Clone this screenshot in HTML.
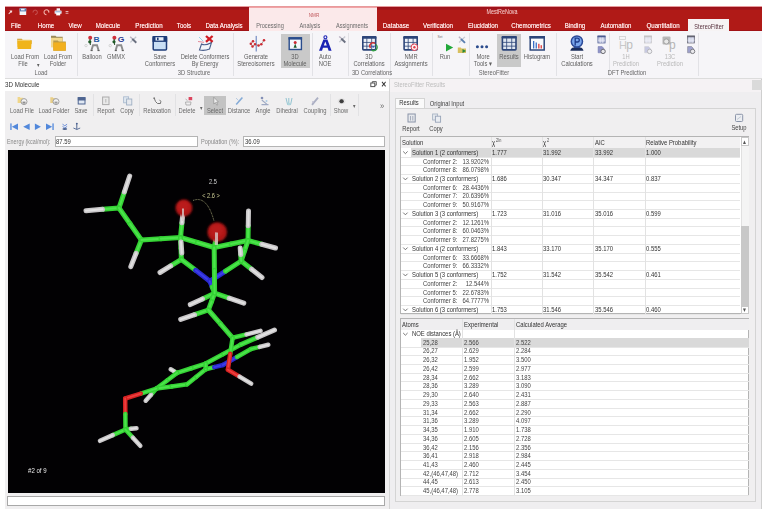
<!DOCTYPE html><html><head><meta charset="utf-8"><style>
html,body{margin:0;padding:0}
body{width:770px;height:516px;position:relative;overflow:hidden;background:#fff;font-family:"Liberation Sans",sans-serif}
.t{position:absolute;white-space:nowrap;line-height:10px}
svg{position:absolute;overflow:visible}
</style></head><body>
<div style="position:absolute;left:5px;top:6px;width:757px;height:25px;background:#b01a17"></div>
<div style="position:absolute;left:5px;top:30px;width:757px;height:1px;background:#a11216"></div>
<div style="position:absolute;left:5px;top:6px;width:757px;height:1px;background:#e89a9c"></div>
<div style="position:absolute;left:5px;top:7px;width:757px;height:2.5px;background:linear-gradient(#98101a,#a8161c)"></div>
<svg style="left:0;top:0" width="770" height="516">
<path d="M8.4 13.8 L10.2 11.4 L9.4 10.6 L12.2 10.4 L12 13 L11.2 12.2 L9 14.2 z" fill="#f6dcdc"/>
<rect x="19.6" y="8.4" width="6.6" height="6.6" fill="#f4f6fa"/><rect x="19.6" y="8.4" width="6.6" height="3" fill="#5a7cb0"/><rect x="21" y="8.8" width="3.6" height="1.6" fill="#e8eef8"/>
<path d="M33 12.5 a2.2 2.2 0 1 1 2 2" fill="none" stroke="#c85a5a" stroke-width="0.9"/>
<path d="M48.8 12.6 a2.4 2.4 0 1 0 -2.4 2" fill="none" stroke="#f0b0a8" stroke-width="1.1"/><path d="M47.6 10.4 l1.8 0.4 l-0.6 1.6z" fill="#f0b0a8"/>
<rect x="56.6" y="8.3" width="3.4" height="2.4" fill="#f4f4f8"/><rect x="54.6" y="10.4" width="7" height="3.4" rx="0.6" fill="#e8eef6"/><rect x="56.2" y="12.6" width="4" height="2.8" fill="#ffffff"/><rect x="55.4" y="11.4" width="5.4" height="0.8" fill="#7a9ac8"/>
<rect x="65.6" y="11.2" width="2.8" height="0.8" fill="#f4d8d8"/><rect x="65.6" y="12.8" width="2.8" height="0.8" fill="#f4d8d8"/>
</svg>
<div style="position:absolute;left:249px;top:7px;width:127.5px;height:24px;background:#fbe9ea;border-top:1.5px solid #f0a4a6;box-sizing:border-box"></div>
<div class="t" style="left:214.00px;width:200px;text-align:center;top:9.82px;font-size:5.52px;color:#c0585c;transform:scaleX(0.833);transform-origin:50% 0;">NMR</div>
<div class="t" style="left:402.00px;width:200px;text-align:center;top:6.78px;font-size:6.48px;color:#f6d6d6;transform:scaleX(0.833);transform-origin:50% 0;">MestReNova</div>
<div class="t" style="left:-83.70px;width:200px;text-align:center;top:21.23px;font-size:7.38px;color:#fbe0e0;transform:scaleX(0.833);transform-origin:50% 0;text-shadow:0 0 0.4px #fbe0e0">File</div>
<div class="t" style="left:-54.10px;width:200px;text-align:center;top:21.23px;font-size:7.38px;color:#fbe0e0;transform:scaleX(0.833);transform-origin:50% 0;text-shadow:0 0 0.4px #fbe0e0">Home</div>
<div class="t" style="left:-24.70px;width:200px;text-align:center;top:21.23px;font-size:7.38px;color:#fbe0e0;transform:scaleX(0.833);transform-origin:50% 0;text-shadow:0 0 0.4px #fbe0e0">View</div>
<div class="t" style="left:8.30px;width:200px;text-align:center;top:21.23px;font-size:7.38px;color:#fbe0e0;transform:scaleX(0.833);transform-origin:50% 0;text-shadow:0 0 0.4px #fbe0e0">Molecule</div>
<div class="t" style="left:48.80px;width:200px;text-align:center;top:21.23px;font-size:7.38px;color:#fbe0e0;transform:scaleX(0.833);transform-origin:50% 0;text-shadow:0 0 0.4px #fbe0e0">Prediction</div>
<div class="t" style="left:84.30px;width:200px;text-align:center;top:21.23px;font-size:7.38px;color:#fbe0e0;transform:scaleX(0.833);transform-origin:50% 0;text-shadow:0 0 0.4px #fbe0e0">Tools</div>
<div class="t" style="left:123.60px;width:200px;text-align:center;top:21.23px;font-size:7.38px;color:#fbe0e0;transform:scaleX(0.833);transform-origin:50% 0;text-shadow:0 0 0.4px #fbe0e0">Data Analysis</div>
<div class="t" style="left:296.00px;width:200px;text-align:center;top:21.23px;font-size:7.38px;color:#fbe0e0;transform:scaleX(0.833);transform-origin:50% 0;text-shadow:0 0 0.4px #fbe0e0">Database</div>
<div class="t" style="left:338.30px;width:200px;text-align:center;top:21.23px;font-size:7.38px;color:#fbe0e0;transform:scaleX(0.833);transform-origin:50% 0;text-shadow:0 0 0.4px #fbe0e0">Verification</div>
<div class="t" style="left:382.50px;width:200px;text-align:center;top:21.23px;font-size:7.38px;color:#fbe0e0;transform:scaleX(0.833);transform-origin:50% 0;text-shadow:0 0 0.4px #fbe0e0">Elucidation</div>
<div class="t" style="left:430.70px;width:200px;text-align:center;top:21.23px;font-size:7.38px;color:#fbe0e0;transform:scaleX(0.833);transform-origin:50% 0;text-shadow:0 0 0.4px #fbe0e0">Chemometrics</div>
<div class="t" style="left:475.00px;width:200px;text-align:center;top:21.23px;font-size:7.38px;color:#fbe0e0;transform:scaleX(0.833);transform-origin:50% 0;text-shadow:0 0 0.4px #fbe0e0">Binding</div>
<div class="t" style="left:515.50px;width:200px;text-align:center;top:21.23px;font-size:7.38px;color:#fbe0e0;transform:scaleX(0.833);transform-origin:50% 0;text-shadow:0 0 0.4px #fbe0e0">Automation</div>
<div class="t" style="left:563.00px;width:200px;text-align:center;top:21.23px;font-size:7.38px;color:#fbe0e0;transform:scaleX(0.833);transform-origin:50% 0;text-shadow:0 0 0.4px #fbe0e0">Quantitation</div>
<div class="t" style="left:170.00px;width:200px;text-align:center;top:21.36px;font-size:6.72px;color:#6a6a6a;transform:scaleX(0.833);transform-origin:50% 0;">Processing</div>
<div class="t" style="left:209.80px;width:200px;text-align:center;top:21.36px;font-size:6.72px;color:#6a6a6a;transform:scaleX(0.833);transform-origin:50% 0;">Analysis</div>
<div class="t" style="left:251.80px;width:200px;text-align:center;top:21.36px;font-size:6.72px;color:#6a6a6a;transform:scaleX(0.833);transform-origin:50% 0;">Assignments</div>
<div style="position:absolute;left:687.8px;top:19.4px;width:41.5px;height:11.600000000000001px;background:#f6f3f4"></div>
<div class="t" style="left:608.60px;width:200px;text-align:center;top:21.56px;font-size:6.72px;color:#5a3440;transform:scaleX(0.833);transform-origin:50% 0;">StereoFitter</div>
<div style="position:absolute;left:5px;top:31px;width:757px;height:47px;background:#f6f5f8"></div>
<div style="position:absolute;left:5px;top:77.8px;width:757px;height:1.0px;background:#dcdcdc"></div>
<div style="position:absolute;left:77px;top:33px;width:0.7999999999999972px;height:43px;background:#e2e2e6"></div>
<div style="position:absolute;left:233px;top:33px;width:0.8000000000000114px;height:43px;background:#e2e2e6"></div>
<div style="position:absolute;left:312px;top:33px;width:0.8000000000000114px;height:43px;background:#e2e2e6"></div>
<div style="position:absolute;left:348.3px;top:33px;width:0.8000000000000114px;height:43px;background:#e2e2e6"></div>
<div style="position:absolute;left:389.5px;top:33px;width:0.8000000000000114px;height:43px;background:#e2e2e6"></div>
<div style="position:absolute;left:431.8px;top:33px;width:0.8000000000000114px;height:43px;background:#e2e2e6"></div>
<div style="position:absolute;left:468.6px;top:33px;width:0.8000000000000114px;height:43px;background:#e2e2e6"></div>
<div style="position:absolute;left:555.5px;top:33px;width:0.7999999999999545px;height:43px;background:#e2e2e6"></div>
<div style="position:absolute;left:609px;top:33px;width:0.7999999999999545px;height:43px;background:#e2e2e6"></div>
<div style="position:absolute;left:698.2px;top:33px;width:0.7999999999999545px;height:43px;background:#e2e2e6"></div>
<div class="t" style="left:-75.25px;width:200px;text-align:center;top:52.45px;font-size:6.96px;color:#606060;transform:scaleX(0.833);transform-origin:50% 0;">Load From</div>
<div class="t" style="left:-77.10px;width:200px;text-align:center;top:59.15px;font-size:6.96px;color:#606060;transform:scaleX(0.833);transform-origin:50% 0;">File</div>
<div class="t" style="left:-61.80px;width:200px;text-align:center;top:59.72px;font-size:5.52px;color:#606060;transform:scaleX(0.833);transform-origin:50% 0;">▾</div>
<div class="t" style="left:-41.60px;width:200px;text-align:center;top:52.45px;font-size:6.96px;color:#606060;transform:scaleX(0.833);transform-origin:50% 0;">Load From</div>
<div class="t" style="left:-41.60px;width:200px;text-align:center;top:59.15px;font-size:6.96px;color:#606060;transform:scaleX(0.833);transform-origin:50% 0;">Folder</div>
<div class="t" style="left:-59.50px;width:200px;text-align:center;top:67.95px;font-size:6.96px;color:#666;transform:scaleX(0.833);transform-origin:50% 0;">Load</div>
<div class="t" style="left:-7.80px;width:200px;text-align:center;top:52.45px;font-size:6.96px;color:#606060;transform:scaleX(0.833);transform-origin:50% 0;">Balloon</div>
<div class="t" style="left:16.00px;width:200px;text-align:center;top:52.45px;font-size:6.96px;color:#606060;transform:scaleX(0.833);transform-origin:50% 0;">GMMX</div>
<div class="t" style="left:59.70px;width:200px;text-align:center;top:52.45px;font-size:6.96px;color:#606060;transform:scaleX(0.833);transform-origin:50% 0;">Save</div>
<div class="t" style="left:59.70px;width:200px;text-align:center;top:59.15px;font-size:6.96px;color:#606060;transform:scaleX(0.833);transform-origin:50% 0;">Conformers</div>
<div class="t" style="left:105.00px;width:200px;text-align:center;top:52.45px;font-size:6.96px;color:#606060;transform:scaleX(0.833);transform-origin:50% 0;">Delete Conformers</div>
<div class="t" style="left:105.00px;width:200px;text-align:center;top:59.15px;font-size:6.96px;color:#606060;transform:scaleX(0.833);transform-origin:50% 0;">By Energy</div>
<div class="t" style="left:94.20px;width:200px;text-align:center;top:67.95px;font-size:6.96px;color:#666;transform:scaleX(0.833);transform-origin:50% 0;">3D Structure</div>
<div class="t" style="left:156.30px;width:200px;text-align:center;top:52.45px;font-size:6.96px;color:#606060;transform:scaleX(0.833);transform-origin:50% 0;">Generate</div>
<div class="t" style="left:156.30px;width:200px;text-align:center;top:59.15px;font-size:6.96px;color:#606060;transform:scaleX(0.833);transform-origin:50% 0;">Stereoisomers</div>
<div style="position:absolute;left:281px;top:34px;width:28.5px;height:33.7px;background:#c9c9c9"></div>
<div class="t" style="left:195.40px;width:200px;text-align:center;top:52.45px;font-size:6.96px;color:#606060;transform:scaleX(0.833);transform-origin:50% 0;">3D</div>
<div class="t" style="left:195.40px;width:200px;text-align:center;top:59.15px;font-size:6.96px;color:#606060;transform:scaleX(0.833);transform-origin:50% 0;">Molecule</div>
<div class="t" style="left:225.00px;width:200px;text-align:center;top:52.45px;font-size:6.96px;color:#606060;transform:scaleX(0.833);transform-origin:50% 0;">Auto</div>
<div class="t" style="left:225.00px;width:200px;text-align:center;top:59.15px;font-size:6.96px;color:#606060;transform:scaleX(0.833);transform-origin:50% 0;">NOE</div>
<div class="t" style="left:269.00px;width:200px;text-align:center;top:52.45px;font-size:6.96px;color:#606060;transform:scaleX(0.833);transform-origin:50% 0;">3D</div>
<div class="t" style="left:269.00px;width:200px;text-align:center;top:59.15px;font-size:6.96px;color:#606060;transform:scaleX(0.833);transform-origin:50% 0;">Correlations</div>
<div class="t" style="left:271.70px;width:200px;text-align:center;top:67.95px;font-size:6.96px;color:#666;transform:scaleX(0.833);transform-origin:50% 0;">3D Correlations</div>
<div class="t" style="left:310.50px;width:200px;text-align:center;top:52.45px;font-size:6.96px;color:#606060;transform:scaleX(0.833);transform-origin:50% 0;">NMR</div>
<div class="t" style="left:310.50px;width:200px;text-align:center;top:59.15px;font-size:6.96px;color:#606060;transform:scaleX(0.833);transform-origin:50% 0;">Assignments</div>
<div class="t" style="left:345.00px;width:200px;text-align:center;top:52.45px;font-size:6.96px;color:#606060;transform:scaleX(0.833);transform-origin:50% 0;">Run</div>
<div class="t" style="left:383.00px;width:200px;text-align:center;top:52.45px;font-size:6.96px;color:#606060;transform:scaleX(0.833);transform-origin:50% 0;">More</div>
<div class="t" style="left:383.00px;width:200px;text-align:center;top:59.15px;font-size:6.96px;color:#606060;transform:scaleX(0.833);transform-origin:50% 0;">Tools ▾</div>
<div style="position:absolute;left:497.2px;top:34px;width:23.900000000000034px;height:33px;background:#c9c9c9"></div>
<div class="t" style="left:408.80px;width:200px;text-align:center;top:52.45px;font-size:6.96px;color:#606060;transform:scaleX(0.833);transform-origin:50% 0;">Results</div>
<div class="t" style="left:437.30px;width:200px;text-align:center;top:52.45px;font-size:6.96px;color:#606060;transform:scaleX(0.833);transform-origin:50% 0;">Histogram</div>
<div class="t" style="left:393.60px;width:200px;text-align:center;top:67.95px;font-size:6.96px;color:#666;transform:scaleX(0.833);transform-origin:50% 0;">StereoFitter</div>
<div class="t" style="left:477.00px;width:200px;text-align:center;top:52.45px;font-size:6.96px;color:#606060;transform:scaleX(0.833);transform-origin:50% 0;">Start</div>
<div class="t" style="left:477.00px;width:200px;text-align:center;top:59.15px;font-size:6.96px;color:#606060;transform:scaleX(0.833);transform-origin:50% 0;">Calculations</div>
<div class="t" style="left:526.00px;width:200px;text-align:center;top:52.45px;font-size:6.96px;color:#b8b8b8;transform:scaleX(0.833);transform-origin:50% 0;">1H</div>
<div class="t" style="left:526.00px;width:200px;text-align:center;top:59.15px;font-size:6.96px;color:#b8b8b8;transform:scaleX(0.833);transform-origin:50% 0;">Prediction</div>
<div class="t" style="left:569.50px;width:200px;text-align:center;top:52.45px;font-size:6.96px;color:#b8b8b8;transform:scaleX(0.833);transform-origin:50% 0;">13C</div>
<div class="t" style="left:569.50px;width:200px;text-align:center;top:59.15px;font-size:6.96px;color:#b8b8b8;transform:scaleX(0.833);transform-origin:50% 0;">Prediction</div>
<div class="t" style="left:526.80px;width:200px;text-align:center;top:67.95px;font-size:6.96px;color:#666;transform:scaleX(0.833);transform-origin:50% 0;">DFT Prediction</div>
<svg style="left:0;top:0" width="770" height="516" viewBox="0 0 770 516">
<path d="M17.2 38.7 h4.544 l1 1.2 h8.804 v4.199999999999999 h-14.2 z" fill="#c99a30"/>
<rect x="17.2" y="39.7" width="13.489999999999998" height="7.199999999999999" fill="#f3d27a"/>
<path d="M17.5 40.800000000000004 h14.2 l-0.6 8.16 h-13.6 z" fill="#f0b41a"/>
<path d="M51 35.8 h4.5 l1 1 h6.2 v5 h-11.7 z" fill="#9c8a58"/><rect x="51" y="37.8" width="11.6" height="9.6" fill="#f3d98e"/>
<path d="M53.3 40.6 h4.5 l1 1 h7 v9.2 h-12.5 z" fill="#b89a48"/><rect x="53.3" y="42.4" width="12.5" height="8.3" fill="#f2b01e"/>
<circle cx="90.2" cy="37.8" r="2" fill="#d0303c"/>
<line x1="90" y1="39" x2="90.4" y2="45" stroke="#3a5a3a" stroke-width="1.1"/>
<circle cx="89.8" cy="41.8" r="1.6" fill="#1f5a28"/>
<circle cx="86" cy="45.6" r="1.2" fill="none" stroke="#c0c0c0" stroke-width="0.6"/>
<path d="M91.4 50.6 L93 45.2 L97 45.2 L98.6 50.6" fill="none" stroke="#8c8c8c" stroke-width="1.9"/>
<path d="M90.6 50.6 h2 M97.6 50.6 h2" stroke="#555" stroke-width="1"/>
<text x="93.6" y="41.8" font-family="Liberation Sans" font-weight="bold" font-size="7.6" fill="#2a5aa0" transform="translate(93.6 0) scale(1.12 1) translate(-93.6 0)">B</text>
<circle cx="114.4" cy="37.8" r="2" fill="#d0303c"/>
<line x1="114.2" y1="39" x2="114.60000000000001" y2="45" stroke="#3a5a3a" stroke-width="1.1"/>
<circle cx="114.0" cy="41.8" r="1.6" fill="#1f5a28"/>
<circle cx="110.2" cy="45.6" r="1.2" fill="none" stroke="#c0c0c0" stroke-width="0.6"/>
<path d="M115.60000000000001 50.6 L117.2 45.2 L121.2 45.2 L122.8 50.6" fill="none" stroke="#8c8c8c" stroke-width="1.9"/>
<path d="M114.8 50.6 h2 M121.8 50.6 h2" stroke="#555" stroke-width="1"/>
<text x="117.8" y="41.8" font-family="Liberation Sans" font-weight="bold" font-size="7.6" fill="#2a3a90" transform="translate(117.8 0) scale(1.12 1) translate(-117.8 0)">G</text>
<line x1="136.2" y1="36.8" x2="130.4" y2="42.4" stroke="#c4c8d0" stroke-width="1.3"/>
<line x1="130.2" y1="36.699999999999996" x2="132" y2="38.4" stroke="#b8b0c0" stroke-width="1.4"/>
<line x1="132.2" y1="38.8" x2="136.3" y2="42.8" stroke="#6a7080" stroke-width="1.9"/>
<rect x="153.2" y="36.8" width="13.3" height="13.3" rx="1" fill="#c9def4" stroke="#1e3c78" stroke-width="1.5"/>
<rect x="152.5" y="36.1" width="14.7" height="5.8" fill="#1e3c78"/><rect x="155.5" y="37.2" width="8" height="3.4" fill="#e6eef8"/><rect x="157" y="37.6" width="1.6" height="2.6" fill="#1e3c78"/>
<path d="M199.5 50 L201.5 44 Q205 46 210.5 43 L211.6 42.2 L209.5 49 Q205 51 199.5 50 z" fill="#f4f6fa" stroke="#4a5f8c" stroke-width="1.1"/>
<line x1="198" y1="41.5" x2="204" y2="42.3" stroke="#e07080" stroke-width="0.8"/><line x1="199" y1="37" x2="203" y2="41" stroke="#80c8e0" stroke-width="0.8"/>
<path d="M206 36 L212.6 41.8 M212.6 36 L206 41.8" stroke="#d01c24" stroke-width="2.3"/>
<line x1="256.2" y1="35.9" x2="256.2" y2="51.5" stroke="#5a78b8" stroke-width="1"/>
<polyline points="264,40.2 261.3,44.2 258.5,45.6 255,44.2 252.5,46.5 250.8,43.8 253,41.3" fill="none" stroke="#a09090" stroke-width="0.9"/>
<circle cx="264" cy="40.2" r="1.25" fill="#cc2a34"/>
<circle cx="261.3" cy="44.2" r="1.25" fill="#cc2a34"/>
<circle cx="258.5" cy="45.6" r="1.25" fill="#cc2a34"/>
<circle cx="252.5" cy="46.5" r="1.25" fill="#cc2a34"/>
<circle cx="250.8" cy="43.8" r="1.25" fill="#cc2a34"/>
<circle cx="253" cy="41.3" r="1.25" fill="#cc2a34"/>
<circle cx="255" cy="44.2" r="1.25" fill="#cc2a34"/>
<rect x="289.2" y="37.9" width="12.2" height="11.6" fill="#f4f8fc" stroke="#2a4c8c" stroke-width="1.4"/><rect x="288.5" y="37.2" width="13.6" height="2.4" fill="#2a4c8c"/>
<circle cx="295.2" cy="42.4" r="1.5" fill="#cc2a34"/><path d="M293.6 47.8 L295.2 43.6 L296.8 47.8 z" fill="#1e5a2a"/>
<path d="M319 50.8 L323.4 39.6 L327.4 39.6 L331.6 50.8 L328.6 50.8 L327.6 47.8 L323 47.8 L322 50.8 z M323.8 45.6 L326.8 45.6 L325.3 41.4 z" fill="#1a22b4" fill-rule="evenodd"/><circle cx="325.4" cy="37.2" r="1.5" fill="none" stroke="#1a22b4" stroke-width="1.1"/>
<line x1="345.2" y1="36.5" x2="339.4" y2="42.1" stroke="#c4c8d0" stroke-width="1.3"/>
<line x1="339.2" y1="36.4" x2="341" y2="38.1" stroke="#b8b0c0" stroke-width="1.4"/>
<line x1="341.2" y1="38.5" x2="345.3" y2="42.5" stroke="#6a7080" stroke-width="1.9"/>
<rect x="362.8" y="36.9" width="12.9" height="13.0" fill="#eef2f8" stroke="#2c4579" stroke-width="1.6" rx="0.8"/><rect x="362" y="36.1" width="14.5" height="2.6" fill="#2c4579" rx="0.8"/><line x1="366.8333333333333" y1="38.1" x2="366.8333333333333" y2="49.900000000000006" stroke="#2c4579" stroke-width="0.8"/><line x1="371.6666666666667" y1="38.1" x2="371.6666666666667" y2="49.900000000000006" stroke="#2c4579" stroke-width="0.8"/><line x1="362.8" y1="42.43333333333334" x2="375.7" y2="42.43333333333334" stroke="#2c4579" stroke-width="0.8"/><line x1="362.8" y1="46.16666666666667" x2="375.7" y2="46.16666666666667" stroke="#2c4579" stroke-width="0.8"/>
<path d="M370.5 48 a3.2 3.2 0 0 1 4.5 -4.5" fill="none" stroke="#d03030" stroke-width="1.4"/><path d="M375.8 44.5 a3.2 3.2 0 0 1 -4.2 5.5" fill="none" stroke="#30a040" stroke-width="1.4"/><circle cx="373.2" cy="46.8" r="0.9" fill="#3050c0"/>
<rect x="404.1" y="36.9" width="13.1" height="13.0" fill="#eef2f8" stroke="#2c4579" stroke-width="1.6" rx="0.8"/><rect x="403.3" y="36.1" width="14.7" height="2.6" fill="#2c4579" rx="0.8"/><line x1="408.2" y1="38.1" x2="408.2" y2="49.900000000000006" stroke="#2c4579" stroke-width="0.8"/><line x1="413.1" y1="38.1" x2="413.1" y2="49.900000000000006" stroke="#2c4579" stroke-width="0.8"/><line x1="404.1" y1="42.43333333333334" x2="417.2" y2="42.43333333333334" stroke="#2c4579" stroke-width="0.8"/><line x1="404.1" y1="46.16666666666667" x2="417.2" y2="46.16666666666667" stroke="#2c4579" stroke-width="0.8"/>
<circle cx="414.4" cy="47.2" r="3.3" fill="#fdf0f0" stroke="#e04050" stroke-width="1"/><circle cx="414.4" cy="47.2" r="1.2" fill="#e04050"/>
<text x="437.4" y="38.3" font-family="Liberation Sans" font-size="3.4" fill="#777">Set</text>
<path d="M446 43.7 L453.2 47.6 L446 51.5 z" fill="#22a83a"/>
<line x1="464.9" y1="36.9" x2="459.09999999999997" y2="42.5" stroke="#c4c8d0" stroke-width="1.3"/>
<line x1="458.9" y1="36.8" x2="460.7" y2="38.5" stroke="#b8b0c0" stroke-width="1.4"/>
<line x1="460.9" y1="38.9" x2="465.0" y2="42.9" stroke="#5a7fb0" stroke-width="1.9"/>
<path d="M457.8 47.6 h3 l0.7 0.8 h4.5 v4.6 h-8.2 z" fill="#d8c060"/><path d="M462.5 49 l3.6 2 l-3.6 2 z" fill="#2a8a3a"/>
<circle cx="477.4" cy="46.8" r="1.5" fill="#2a4a8c"/>
<circle cx="482" cy="46.8" r="1.5" fill="#2a4a8c"/>
<circle cx="486.6" cy="46.8" r="1.5" fill="#2a4a8c"/>
<rect x="502.40000000000003" y="36.8" width="13.6" height="13.1" fill="#dfe6f0" stroke="#2c4579" stroke-width="1.6" rx="0.8"/><rect x="501.6" y="36" width="15.2" height="2.6" fill="#2c4579" rx="0.8"/><line x1="506.6666666666667" y1="38" x2="506.6666666666667" y2="49.900000000000006" stroke="#2c4579" stroke-width="0.8"/><line x1="511.73333333333335" y1="38" x2="511.73333333333335" y2="49.900000000000006" stroke="#2c4579" stroke-width="0.8"/><line x1="502.40000000000003" y1="42.36666666666667" x2="516.0000000000001" y2="42.36666666666667" stroke="#2c4579" stroke-width="0.8"/><line x1="502.40000000000003" y1="46.13333333333333" x2="516.0000000000001" y2="46.13333333333333" stroke="#2c4579" stroke-width="0.8"/>
<rect x="530.2" y="36.8" width="14" height="13.2" fill="#f8fafc" stroke="#2c4579" stroke-width="1.5"/><rect x="529.5" y="36" width="15.4" height="2.6" fill="#2c4579"/>
<rect x="533" y="41" width="1.3" height="7.5" fill="#3a70c8"/><rect x="535.6" y="42.5" width="1.3" height="6" fill="#3a70c8"/><rect x="538.2" y="43.8" width="1.3" height="4.7" fill="#e03a3a"/><rect x="540.6" y="45.2" width="1.3" height="3.3" fill="#e03a3a"/>
<path d="M570.3 50.8 Q571 47.6 573.5 47.4 h6.8 Q582.8 47.6 583.5 50.8 z" fill="#1a2c5a"/><rect x="574" y="46" width="5.8" height="2" fill="#2a4a90"/>
<circle cx="576.9" cy="41.5" r="5.6" fill="#7aa6ec" stroke="#2c4a98" stroke-width="1.5"/>
<path d="M575.2 45.6 V38.2 h2.2 a1.9 1.9 0 0 1 0 3.8 h-2.2" fill="none" stroke="#1e3a88" stroke-width="1.3"/>
<g opacity="1"><rect x="597.9" y="36" width="7.2" height="7" fill="#c8cce4" stroke="#4a5a90" stroke-width="0.7"/><rect x="597.5" y="35.7" width="8" height="1.6" fill="#4a5a90"/><path d="M600.3 37.5 v5.4 M602.7 37.5 v5.4 M598.0 40.2 h7" stroke="#f0f2f8" stroke-width="0.6"/><path d="M598.1 46.6 h4 l1.6 1.6 v4.6 h-5.6 z" fill="#9094c8" stroke="#6a70a8" stroke-width="0.5"/><circle cx="603.1" cy="51.4" r="2.2" fill="#e8e8ec" stroke="#6a6a70" stroke-width="1"/></g>
<g opacity="0.45"><rect x="644.4" y="36" width="7.2" height="7" fill="#c8cce4" stroke="#8a8a8a" stroke-width="0.7"/><rect x="644" y="35.7" width="8" height="1.6" fill="#8a8a8a"/><path d="M646.8 37.5 v5.4 M649.2 37.5 v5.4 M644.5 40.2 h7" stroke="#f0f2f8" stroke-width="0.6"/><path d="M644.6 46.6 h4 l1.6 1.6 v4.6 h-5.6 z" fill="#9094c8" stroke="#9a9a9a" stroke-width="0.5"/><circle cx="649.6" cy="51.4" r="2.2" fill="#e8e8ec" stroke="#6a6a70" stroke-width="1"/></g>
<g opacity="0.85"><rect x="687.4" y="36" width="7.2" height="7" fill="#c8cce4" stroke="#4a4a5a" stroke-width="0.7"/><rect x="687" y="35.7" width="8" height="1.6" fill="#4a4a5a"/><path d="M689.8 37.5 v5.4 M692.2 37.5 v5.4 M687.5 40.2 h7" stroke="#f0f2f8" stroke-width="0.6"/><path d="M687.6 46.6 h4 l1.6 1.6 v4.6 h-5.6 z" fill="#9094c8" stroke="#5a5a6a" stroke-width="0.5"/><circle cx="692.6" cy="51.4" r="2.2" fill="#e8e8ec" stroke="#6a6a70" stroke-width="1"/></g>
<text x="619" y="48.6" font-family="Liberation Sans" font-size="11" fill="#c8c8c8">H</text><text x="626.2" y="48.6" font-family="Liberation Sans" font-size="12" fill="#bdbdbd">p</text><rect x="619.4" y="36.4" width="6" height="3" fill="none" stroke="#d0d0d0" stroke-width="0.8"/>
<rect x="662.5" y="36.4" width="8" height="8" fill="#b8b8b8" rx="1"/><circle cx="666.3" cy="41.5" r="2.6" fill="#e8e8e8" stroke="#a0a0a0" stroke-width="1"/><text x="669" y="48.6" font-family="Liberation Sans" font-size="12" fill="#b4b4b4">p</text>
</svg>
<div style="position:absolute;left:5px;top:78.8px;width:384px;height:430.2px;background:#f0eff0"></div>
<div style="position:absolute;left:5px;top:78.8px;width:384px;height:11.799999999999997px;background:#ffffff"></div>
<div class="t" style="left:5.30px;top:80.43px;font-size:7.44px;color:#333;transform:scaleX(0.833);transform-origin:0 0;">3D Molecule</div>
<svg style="left:0;top:0" width="770" height="516"><rect x="370.8" y="83" width="4" height="3.6" fill="none" stroke="#555" stroke-width="1"/><path d="M372.3 83 v-1.4 h4 v3.6 h-1.5" fill="none" stroke="#555" stroke-width="0.9"/></svg>
<div class="t" style="left:283.60px;width:200px;text-align:center;top:79.50px;font-size:7.92px;color:#333;transform:scaleX(0.833);transform-origin:50% 0;font-weight:bold">✕</div>
<div class="t" style="left:-78.10px;width:200px;text-align:center;top:105.75px;font-size:6.96px;color:#6a6a6a;transform:scaleX(0.833);transform-origin:50% 0;">Load File</div>
<div class="t" style="left:-46.30px;width:200px;text-align:center;top:105.75px;font-size:6.96px;color:#6a6a6a;transform:scaleX(0.833);transform-origin:50% 0;">Load Folder</div>
<div class="t" style="left:-18.80px;width:200px;text-align:center;top:105.75px;font-size:6.96px;color:#6a6a6a;transform:scaleX(0.833);transform-origin:50% 0;">Save</div>
<div class="t" style="left:5.50px;width:200px;text-align:center;top:105.75px;font-size:6.96px;color:#6a6a6a;transform:scaleX(0.833);transform-origin:50% 0;">Report</div>
<div class="t" style="left:27.30px;width:200px;text-align:center;top:105.75px;font-size:6.96px;color:#6a6a6a;transform:scaleX(0.833);transform-origin:50% 0;">Copy</div>
<div class="t" style="left:56.60px;width:200px;text-align:center;top:105.75px;font-size:6.96px;color:#6a6a6a;transform:scaleX(0.833);transform-origin:50% 0;">Relaxation</div>
<div class="t" style="left:87.10px;width:200px;text-align:center;top:105.75px;font-size:6.96px;color:#6a6a6a;transform:scaleX(0.833);transform-origin:50% 0;">Delete</div>
<div style="position:absolute;left:175px;top:94px;width:0.8000000000000114px;height:22px;background:#e2e2e4"></div>
<div style="position:absolute;left:93.3px;top:94px;width:0.7999999999999972px;height:22px;background:#e2e2e4"></div>
<div style="position:absolute;left:138.7px;top:94px;width:0.8000000000000114px;height:22px;background:#e2e2e4"></div>
<div style="position:absolute;left:204.3px;top:95.9px;width:21.399999999999977px;height:19.19999999999999px;background:#c3c3c3"></div>
<div class="t" style="left:115.40px;width:200px;text-align:center;top:105.95px;font-size:6.96px;color:#6a6a6a;transform:scaleX(0.833);transform-origin:50% 0;">Select</div>
<div class="t" style="left:139.00px;width:200px;text-align:center;top:105.95px;font-size:6.96px;color:#6a6a6a;transform:scaleX(0.833);transform-origin:50% 0;">Distance</div>
<div class="t" style="left:163.20px;width:200px;text-align:center;top:105.95px;font-size:6.96px;color:#6a6a6a;transform:scaleX(0.833);transform-origin:50% 0;">Angle</div>
<div class="t" style="left:187.10px;width:200px;text-align:center;top:105.95px;font-size:6.96px;color:#6a6a6a;transform:scaleX(0.833);transform-origin:50% 0;">Dihedral</div>
<div class="t" style="left:214.80px;width:200px;text-align:center;top:105.95px;font-size:6.96px;color:#6a6a6a;transform:scaleX(0.833);transform-origin:50% 0;">Coupling</div>
<div class="t" style="left:241.30px;width:200px;text-align:center;top:105.95px;font-size:6.96px;color:#6a6a6a;transform:scaleX(0.833);transform-origin:50% 0;">Show</div>
<div class="t" style="left:101.00px;width:200px;text-align:center;top:103.20px;font-size:6.00px;color:#666;transform:scaleX(0.833);transform-origin:50% 0;">▾</div>
<div class="t" style="left:253.80px;width:200px;text-align:center;top:101.20px;font-size:6.00px;color:#666;transform:scaleX(0.833);transform-origin:50% 0;">▾</div>
<div style="position:absolute;left:330px;top:94px;width:0.8000000000000114px;height:22px;background:#e2e2e4"></div>
<div style="position:absolute;left:358.4px;top:94px;width:0.8000000000000114px;height:22px;background:#e2e2e4"></div>
<div class="t" style="left:282.00px;width:200px;text-align:center;top:100.85px;font-size:9.00px;color:#666;transform:scaleX(0.833);transform-origin:50% 0;">»</div>
<svg style="left:0;top:0;opacity:0.8" width="770" height="516" viewBox="0 0 770 516">
<path d="M17.6 97 h2.2 l0.6 0.7 h2.8 v5.4 h-5.6 z" fill="#f0d070"/><circle cx="24" cy="101.6" r="3" fill="#f4f4f4" stroke="#8a8a8a" stroke-width="1"/><rect x="22.5" y="101.6" width="3" height="2" fill="#777"/>
<path d="M50.3 97.2 h2.4 l0.6 0.7 h2.4 v5 h-5.4 z" fill="#e8c870"/><circle cx="56" cy="101.6" r="3" fill="#f4f4f4" stroke="#8a8a8a" stroke-width="1"/><rect x="54.5" y="101.6" width="3" height="2" fill="#888"/>
<rect x="78.2" y="97.6" width="6.8" height="6.4" fill="#dde7f4" stroke="#26427a" stroke-width="1"/><rect x="77.8" y="97.3" width="7.6" height="3.2" fill="#26427a"/>
<rect x="102.6" y="97" width="6.4" height="7.6" fill="#e8e8e8" stroke="#9a9a9a" stroke-width="1"/><line x1="105.8" y1="99" x2="105.8" y2="102.5" stroke="#999" stroke-width="0.8"/>
<rect x="123.6" y="96.8" width="5" height="6" fill="#dce6f0" stroke="#9ab0c8" stroke-width="0.9"/><rect x="126.6" y="99" width="5.2" height="6" fill="#e4e8ee" stroke="#8aa0b8" stroke-width="0.9"/>
<path d="M154 97.5 L155.5 101.5 Q157 104.5 160.5 103.5 Q161.6 101 159.5 99.8" fill="none" stroke="#555" stroke-width="1"/><path d="M153.2 99 l1 -2 l1 2 z" fill="#555"/>
<rect x="188.6" y="97" width="3.6" height="3.2" fill="#d81c3c"/><path d="M185.5 99 l2 1.6 M185.5 102 h5.5 l-0.5 3 h-4.5 z" fill="none" stroke="#999" stroke-width="0.9"/>
<path d="M213.8 97.2 L213.8 104 L215.4 102.6 L216.8 105.2 L217.8 104.7 L216.5 102.2 L218.4 102 z" fill="#f8f8f8" stroke="#777" stroke-width="0.6"/>
<line x1="236.2" y1="104.6" x2="242.4" y2="97.4" stroke="#6a9ad0" stroke-width="1.6"/><line x1="236" y1="98" x2="238.5" y2="100.5" stroke="#9ab8d8" stroke-width="0.8"/>
<circle cx="262" cy="98" r="1.3" fill="#6a78a8"/><path d="M261.5 104.6 h7 M261.8 100 l5.5 4.6" stroke="#8a98b8" stroke-width="1.1" fill="none"/><circle cx="266.5" cy="101" r="1" fill="#9ac0e0"/>
<path d="M286 98 l1.6 6.6 h3 l1.4 -6.6 M288.8 98 v5" stroke="#7ab8c8" stroke-width="1" fill="none"/><circle cx="289" cy="104" r="1.3" fill="#a0d0d8"/>
<line x1="312" y1="104.8" x2="318" y2="97.6" stroke="#9aa0b8" stroke-width="1.8"/><circle cx="313" cy="102" r="0.9" fill="#b0b0c8"/>
<circle cx="341.6" cy="101.2" r="2.2" fill="#111"/><ellipse cx="341.6" cy="101.2" rx="3.6" ry="2.4" fill="none" stroke="#ccc" stroke-width="0.6"/>
<rect x="10.3" y="123.4" width="1.3" height="6.6" fill="#2b6fd6"/><path d="M18 123.4 L11.8 126.7 L18 130 z" fill="#2b6fd6"/>
<path d="M29.7 123.4 L23.2 126.7 L29.7 130 z" fill="#2b6fd6"/>
<path d="M34.9 123.4 L40.9 126.7 L34.9 130 z" fill="#2b6fd6"/>
<path d="M46 123.4 L52.2 126.7 L46 130 z" fill="#2b6fd6"/><rect x="52.4" y="123.4" width="1.3" height="6.6" fill="#2b6fd6"/>
<path d="M62.5 124.2 l2.3 1.6 l2.3 -1.6 M62.5 126.4 l2.3 1.6 l2.3 -1.6" stroke="#3a6ad0" stroke-width="0.9" fill="none"/><ellipse cx="64.8" cy="129" rx="2.4" ry="1" fill="#26427a"/>
<line x1="76.8" y1="123" x2="76.8" y2="129.4" stroke="#26427a" stroke-width="1"/><path d="M73.4 128 q3.4 3 6.8 0" stroke="#26427a" stroke-width="0.9" fill="none"/><circle cx="76.8" cy="123.6" r="0.9" fill="#26427a"/>
</svg>
<div class="t" style="left:7.30px;top:137.48px;font-size:6.48px;color:#888;transform:scaleX(0.833);transform-origin:0 0;">Energy (kcal/mol):</div>
<div style="position:absolute;left:55px;top:136.3px;width:142.5px;height:10.399999999999977px;background:#fff;border:0.8px solid #b4b4b4;box-sizing:border-box"></div>
<div class="t" style="left:56.00px;top:137.35px;font-size:7.08px;color:#333;transform:scaleX(0.833);transform-origin:0 0;">87.59</div>
<div class="t" style="left:200.50px;top:137.46px;font-size:6.72px;color:#888;transform:scaleX(0.833);transform-origin:0 0;">Population (%):</div>
<div style="position:absolute;left:243px;top:136.3px;width:142.39999999999998px;height:10.399999999999977px;background:#fff;border:0.8px solid #b4b4b4;box-sizing:border-box"></div>
<div class="t" style="left:244.70px;top:137.35px;font-size:7.08px;color:#333;transform:scaleX(0.833);transform-origin:0 0;">36.09</div>
<div style="position:absolute;left:8px;top:150px;width:377px;height:343px;background:#020103"></div>
<svg style="left:0;top:0" width="770" height="516" viewBox="0 0 770 516">
<defs><filter id="bl" x="-5%" y="-5%" width="110%" height="110%"><feGaussianBlur stdDeviation="0.45"/></filter>
<radialGradient id="og" cx="40%" cy="40%" r="60%"><stop offset="0" stop-color="#e03535"/><stop offset="0.7" stop-color="#a81414"/><stop offset="1" stop-color="#6a0808"/></radialGradient></defs>
<g filter="url(#bl)" stroke-linecap="round">
<line x1="119" y1="208" x2="124.35" y2="192.0" stroke="#34d234" stroke-width="5.0"/>
<line x1="119" y1="208" x2="124.35" y2="192.0" stroke="#5cf05c" stroke-width="2.00" opacity="0.6"/>
<line x1="124.35" y1="192.0" x2="129.7" y2="176" stroke="#c8c6c8" stroke-width="5.0"/>
<line x1="124.35" y1="192.0" x2="129.7" y2="176" stroke="#f2f2f2" stroke-width="2.00" opacity="0.6"/>
<line x1="119" y1="208" x2="102.5" y2="209.35" stroke="#34d234" stroke-width="5.0"/>
<line x1="119" y1="208" x2="102.5" y2="209.35" stroke="#5cf05c" stroke-width="2.00" opacity="0.6"/>
<line x1="102.5" y1="209.35" x2="86" y2="210.7" stroke="#c8c6c8" stroke-width="5.0"/>
<line x1="102.5" y1="209.35" x2="86" y2="210.7" stroke="#f2f2f2" stroke-width="2.00" opacity="0.6"/>
<line x1="119" y1="208" x2="130.2" y2="224.0" stroke="#34d234" stroke-width="5.0"/>
<line x1="119" y1="208" x2="130.2" y2="224.0" stroke="#5cf05c" stroke-width="2.00" opacity="0.6"/>
<line x1="130.2" y1="224.0" x2="141.4" y2="240" stroke="#34d234" stroke-width="5.0"/>
<line x1="130.2" y1="224.0" x2="141.4" y2="240" stroke="#5cf05c" stroke-width="2.00" opacity="0.6"/>
<line x1="141.4" y1="240" x2="136.10000000000002" y2="253.3" stroke="#34d234" stroke-width="5.0"/>
<line x1="141.4" y1="240" x2="136.10000000000002" y2="253.3" stroke="#5cf05c" stroke-width="2.00" opacity="0.6"/>
<line x1="136.10000000000002" y1="253.3" x2="130.8" y2="266.6" stroke="#c8c6c8" stroke-width="5.0"/>
<line x1="136.10000000000002" y1="253.3" x2="130.8" y2="266.6" stroke="#f2f2f2" stroke-width="2.00" opacity="0.6"/>
<line x1="141.4" y1="240" x2="160.95" y2="238.75" stroke="#34d234" stroke-width="5.0"/>
<line x1="141.4" y1="240" x2="160.95" y2="238.75" stroke="#5cf05c" stroke-width="2.00" opacity="0.6"/>
<line x1="160.95" y1="238.75" x2="180.5" y2="237.5" stroke="#34d234" stroke-width="5.0"/>
<line x1="160.95" y1="238.75" x2="180.5" y2="237.5" stroke="#5cf05c" stroke-width="2.00" opacity="0.6"/>
<line x1="180.5" y1="237.5" x2="181.95" y2="222.75" stroke="#34d234" stroke-width="5.0"/>
<line x1="180.5" y1="237.5" x2="181.95" y2="222.75" stroke="#5cf05c" stroke-width="2.00" opacity="0.6"/>
<line x1="181.95" y1="222.75" x2="183.4" y2="208" stroke="#c8c6c8" stroke-width="5.0"/>
<line x1="181.95" y1="222.75" x2="183.4" y2="208" stroke="#f2f2f2" stroke-width="2.00" opacity="0.6"/>
<line x1="180.5" y1="237.5" x2="197.35" y2="242.5" stroke="#34d234" stroke-width="5.0"/>
<line x1="180.5" y1="237.5" x2="197.35" y2="242.5" stroke="#5cf05c" stroke-width="2.00" opacity="0.6"/>
<line x1="197.35" y1="242.5" x2="214.2" y2="247.5" stroke="#34d234" stroke-width="5.0"/>
<line x1="197.35" y1="242.5" x2="214.2" y2="247.5" stroke="#5cf05c" stroke-width="2.00" opacity="0.6"/>
<line x1="180.5" y1="237.5" x2="180.95" y2="248.45" stroke="#34d234" stroke-width="5.0"/>
<line x1="180.5" y1="237.5" x2="180.95" y2="248.45" stroke="#5cf05c" stroke-width="2.00" opacity="0.6"/>
<line x1="180.95" y1="248.45" x2="181.4" y2="259.4" stroke="#34d234" stroke-width="5.0"/>
<line x1="180.95" y1="248.45" x2="181.4" y2="259.4" stroke="#5cf05c" stroke-width="2.00" opacity="0.6"/>
<line x1="181.4" y1="259.4" x2="170.7" y2="265.95" stroke="#34d234" stroke-width="5.0"/>
<line x1="181.4" y1="259.4" x2="170.7" y2="265.95" stroke="#5cf05c" stroke-width="2.00" opacity="0.6"/>
<line x1="170.7" y1="265.95" x2="160" y2="272.5" stroke="#c8c6c8" stroke-width="5.0"/>
<line x1="170.7" y1="265.95" x2="160" y2="272.5" stroke="#f2f2f2" stroke-width="2.00" opacity="0.6"/>
<line x1="181.4" y1="259.4" x2="195.65" y2="270.29999999999995" stroke="#34d234" stroke-width="5.0"/>
<line x1="181.4" y1="259.4" x2="195.65" y2="270.29999999999995" stroke="#5cf05c" stroke-width="2.00" opacity="0.6"/>
<line x1="195.65" y1="270.29999999999995" x2="209.9" y2="281.2" stroke="#2a2ad0" stroke-width="5.0"/>
<line x1="195.65" y1="270.29999999999995" x2="209.9" y2="281.2" stroke="#4a4af8" stroke-width="2.00" opacity="0.6"/>
<line x1="209.9" y1="281.2" x2="225.55" y2="271.1" stroke="#2a2ad0" stroke-width="5.0"/>
<line x1="209.9" y1="281.2" x2="225.55" y2="271.1" stroke="#4a4af8" stroke-width="2.00" opacity="0.6"/>
<line x1="225.55" y1="271.1" x2="241.2" y2="261" stroke="#34d234" stroke-width="5.0"/>
<line x1="225.55" y1="271.1" x2="241.2" y2="261" stroke="#5cf05c" stroke-width="2.00" opacity="0.6"/>
<line x1="209.9" y1="281.2" x2="212.25" y2="287.2" stroke="#2a2ad0" stroke-width="5.0"/>
<line x1="209.9" y1="281.2" x2="212.25" y2="287.2" stroke="#4a4af8" stroke-width="2.00" opacity="0.6"/>
<line x1="212.25" y1="287.2" x2="214.6" y2="293.2" stroke="#34d234" stroke-width="5.0"/>
<line x1="212.25" y1="287.2" x2="214.6" y2="293.2" stroke="#5cf05c" stroke-width="2.00" opacity="0.6"/>
<line x1="214.2" y1="247.5" x2="215.89999999999998" y2="239.65" stroke="#34d234" stroke-width="5.0"/>
<line x1="214.2" y1="247.5" x2="215.89999999999998" y2="239.65" stroke="#5cf05c" stroke-width="2.00" opacity="0.6"/>
<line x1="215.89999999999998" y1="239.65" x2="217.6" y2="231.8" stroke="#c8c6c8" stroke-width="5.0"/>
<line x1="215.89999999999998" y1="239.65" x2="217.6" y2="231.8" stroke="#f2f2f2" stroke-width="2.00" opacity="0.6"/>
<line x1="214.2" y1="247.5" x2="231.1" y2="244.0" stroke="#34d234" stroke-width="5.0"/>
<line x1="214.2" y1="247.5" x2="231.1" y2="244.0" stroke="#5cf05c" stroke-width="2.00" opacity="0.6"/>
<line x1="231.1" y1="244.0" x2="248" y2="240.5" stroke="#34d234" stroke-width="5.0"/>
<line x1="231.1" y1="244.0" x2="248" y2="240.5" stroke="#5cf05c" stroke-width="2.00" opacity="0.6"/>
<line x1="248" y1="240.5" x2="248.25" y2="225.75" stroke="#34d234" stroke-width="5.0"/>
<line x1="248" y1="240.5" x2="248.25" y2="225.75" stroke="#5cf05c" stroke-width="2.00" opacity="0.6"/>
<line x1="248.25" y1="225.75" x2="248.5" y2="211" stroke="#c8c6c8" stroke-width="5.0"/>
<line x1="248.25" y1="225.75" x2="248.5" y2="211" stroke="#f2f2f2" stroke-width="2.00" opacity="0.6"/>
<line x1="248" y1="240.5" x2="261.75" y2="244.25" stroke="#34d234" stroke-width="5.0"/>
<line x1="248" y1="240.5" x2="261.75" y2="244.25" stroke="#5cf05c" stroke-width="2.00" opacity="0.6"/>
<line x1="261.75" y1="244.25" x2="275.5" y2="248" stroke="#c8c6c8" stroke-width="5.0"/>
<line x1="261.75" y1="244.25" x2="275.5" y2="248" stroke="#f2f2f2" stroke-width="2.00" opacity="0.6"/>
<line x1="248" y1="240.5" x2="244.6" y2="250.75" stroke="#34d234" stroke-width="5.0"/>
<line x1="248" y1="240.5" x2="244.6" y2="250.75" stroke="#5cf05c" stroke-width="2.00" opacity="0.6"/>
<line x1="244.6" y1="250.75" x2="241.2" y2="261" stroke="#34d234" stroke-width="5.0"/>
<line x1="244.6" y1="250.75" x2="241.2" y2="261" stroke="#5cf05c" stroke-width="2.00" opacity="0.6"/>
<line x1="241.2" y1="261" x2="251.6" y2="269.25" stroke="#34d234" stroke-width="5.0"/>
<line x1="241.2" y1="261" x2="251.6" y2="269.25" stroke="#5cf05c" stroke-width="2.00" opacity="0.6"/>
<line x1="251.6" y1="269.25" x2="262" y2="277.5" stroke="#c8c6c8" stroke-width="5.0"/>
<line x1="251.6" y1="269.25" x2="262" y2="277.5" stroke="#f2f2f2" stroke-width="2.00" opacity="0.6"/>
<line x1="241.2" y1="261" x2="240.7" y2="254.5" stroke="#34d234" stroke-width="5.0"/>
<line x1="241.2" y1="261" x2="240.7" y2="254.5" stroke="#5cf05c" stroke-width="2.00" opacity="0.6"/>
<line x1="240.7" y1="254.5" x2="240.2" y2="248" stroke="#c8c6c8" stroke-width="5.0"/>
<line x1="240.7" y1="254.5" x2="240.2" y2="248" stroke="#f2f2f2" stroke-width="2.00" opacity="0.6"/>
<line x1="214.6" y1="293.2" x2="202.45" y2="298.9" stroke="#34d234" stroke-width="5.0"/>
<line x1="214.6" y1="293.2" x2="202.45" y2="298.9" stroke="#5cf05c" stroke-width="2.00" opacity="0.6"/>
<line x1="202.45" y1="298.9" x2="190.3" y2="304.6" stroke="#c8c6c8" stroke-width="5.0"/>
<line x1="202.45" y1="298.9" x2="190.3" y2="304.6" stroke="#f2f2f2" stroke-width="2.00" opacity="0.6"/>
<line x1="214.6" y1="293.2" x2="229.2" y2="298.2" stroke="#34d234" stroke-width="5.0"/>
<line x1="214.6" y1="293.2" x2="229.2" y2="298.2" stroke="#5cf05c" stroke-width="2.00" opacity="0.6"/>
<line x1="229.2" y1="298.2" x2="243.8" y2="303.2" stroke="#c8c6c8" stroke-width="5.0"/>
<line x1="229.2" y1="298.2" x2="243.8" y2="303.2" stroke="#f2f2f2" stroke-width="2.00" opacity="0.6"/>
<line x1="214.6" y1="293.2" x2="211.5" y2="301.6" stroke="#34d234" stroke-width="5.0"/>
<line x1="214.6" y1="293.2" x2="211.5" y2="301.6" stroke="#5cf05c" stroke-width="2.00" opacity="0.6"/>
<line x1="211.5" y1="301.6" x2="208.4" y2="310" stroke="#34d234" stroke-width="5.0"/>
<line x1="211.5" y1="301.6" x2="208.4" y2="310" stroke="#5cf05c" stroke-width="2.00" opacity="0.6"/>
<line x1="208.4" y1="310" x2="194.55" y2="314.7" stroke="#34d234" stroke-width="5.0"/>
<line x1="208.4" y1="310" x2="194.55" y2="314.7" stroke="#5cf05c" stroke-width="2.00" opacity="0.6"/>
<line x1="194.55" y1="314.7" x2="180.7" y2="319.4" stroke="#c8c6c8" stroke-width="5.0"/>
<line x1="194.55" y1="314.7" x2="180.7" y2="319.4" stroke="#f2f2f2" stroke-width="2.00" opacity="0.6"/>
<line x1="208.4" y1="310" x2="220.5" y2="323.9" stroke="#34d234" stroke-width="5.0"/>
<line x1="208.4" y1="310" x2="220.5" y2="323.9" stroke="#5cf05c" stroke-width="2.00" opacity="0.6"/>
<line x1="220.5" y1="323.9" x2="232.6" y2="337.8" stroke="#34d234" stroke-width="5.0"/>
<line x1="220.5" y1="323.9" x2="232.6" y2="337.8" stroke="#5cf05c" stroke-width="2.00" opacity="0.6"/>
<line x1="232.6" y1="337.8" x2="246.55" y2="334.35" stroke="#34d234" stroke-width="4.5"/>
<line x1="232.6" y1="337.8" x2="246.55" y2="334.35" stroke="#5cf05c" stroke-width="1.80" opacity="0.6"/>
<line x1="246.55" y1="334.35" x2="260.5" y2="330.9" stroke="#c8c6c8" stroke-width="4.5"/>
<line x1="246.55" y1="334.35" x2="260.5" y2="330.9" stroke="#f2f2f2" stroke-width="1.80" opacity="0.6"/>
<line x1="205.7" y1="369.3" x2="214.3" y2="367.15" stroke="#34d234" stroke-width="4.5"/>
<line x1="205.7" y1="369.3" x2="214.3" y2="367.15" stroke="#5cf05c" stroke-width="1.80" opacity="0.6"/>
<line x1="214.3" y1="367.15" x2="222.9" y2="365" stroke="#2a2ad0" stroke-width="4.5"/>
<line x1="214.3" y1="367.15" x2="222.9" y2="365" stroke="#4a4af8" stroke-width="1.80" opacity="0.6"/>
<line x1="222.9" y1="365" x2="236.95" y2="357.0" stroke="#2a2ad0" stroke-width="4.5"/>
<line x1="222.9" y1="365" x2="236.95" y2="357.0" stroke="#4a4af8" stroke-width="1.80" opacity="0.6"/>
<line x1="236.95" y1="357.0" x2="251" y2="349" stroke="#34d234" stroke-width="4.5"/>
<line x1="236.95" y1="357.0" x2="251" y2="349" stroke="#5cf05c" stroke-width="1.80" opacity="0.6"/>
<line x1="251" y1="349" x2="259.65" y2="346.9" stroke="#34d234" stroke-width="4.5"/>
<line x1="251" y1="349" x2="259.65" y2="346.9" stroke="#5cf05c" stroke-width="1.80" opacity="0.6"/>
<line x1="259.65" y1="346.9" x2="268.3" y2="344.8" stroke="#c8c6c8" stroke-width="4.5"/>
<line x1="259.65" y1="346.9" x2="268.3" y2="344.8" stroke="#f2f2f2" stroke-width="1.80" opacity="0.6"/>
<line x1="205.7" y1="363.6" x2="223.35" y2="354.05" stroke="#34d234" stroke-width="4.5"/>
<line x1="205.7" y1="363.6" x2="223.35" y2="354.05" stroke="#5cf05c" stroke-width="1.80" opacity="0.6"/>
<line x1="223.35" y1="354.05" x2="241" y2="344.5" stroke="#34d234" stroke-width="4.5"/>
<line x1="223.35" y1="354.05" x2="241" y2="344.5" stroke="#5cf05c" stroke-width="1.80" opacity="0.6"/>
<line x1="241" y1="344.5" x2="257.75" y2="337.25" stroke="#34d234" stroke-width="5.0"/>
<line x1="241" y1="344.5" x2="257.75" y2="337.25" stroke="#5cf05c" stroke-width="2.00" opacity="0.6"/>
<line x1="257.75" y1="337.25" x2="274.5" y2="330" stroke="#c8c6c8" stroke-width="5.0"/>
<line x1="257.75" y1="337.25" x2="274.5" y2="330" stroke="#f2f2f2" stroke-width="2.00" opacity="0.6"/>
<line x1="205.7" y1="363.6" x2="191.39999999999998" y2="368.25" stroke="#34d234" stroke-width="4.5"/>
<line x1="205.7" y1="363.6" x2="191.39999999999998" y2="368.25" stroke="#5cf05c" stroke-width="1.80" opacity="0.6"/>
<line x1="191.39999999999998" y1="368.25" x2="177.1" y2="372.9" stroke="#34d234" stroke-width="4.5"/>
<line x1="191.39999999999998" y1="368.25" x2="177.1" y2="372.9" stroke="#5cf05c" stroke-width="1.80" opacity="0.6"/>
<line x1="177.1" y1="372.9" x2="173.89999999999998" y2="371.1" stroke="#34d234" stroke-width="4.5"/>
<line x1="177.1" y1="372.9" x2="173.89999999999998" y2="371.1" stroke="#5cf05c" stroke-width="1.80" opacity="0.6"/>
<line x1="173.89999999999998" y1="371.1" x2="170.7" y2="369.3" stroke="#c8c6c8" stroke-width="4.5"/>
<line x1="173.89999999999998" y1="371.1" x2="170.7" y2="369.3" stroke="#f2f2f2" stroke-width="1.80" opacity="0.6"/>
<line x1="177.1" y1="372.9" x2="166.75" y2="380.75" stroke="#34d234" stroke-width="4.5"/>
<line x1="177.1" y1="372.9" x2="166.75" y2="380.75" stroke="#5cf05c" stroke-width="1.80" opacity="0.6"/>
<line x1="166.75" y1="380.75" x2="156.4" y2="388.6" stroke="#34d234" stroke-width="4.5"/>
<line x1="166.75" y1="380.75" x2="156.4" y2="388.6" stroke="#5cf05c" stroke-width="1.80" opacity="0.6"/>
<line x1="156.4" y1="388.6" x2="171.75" y2="386.45000000000005" stroke="#34d234" stroke-width="4.5"/>
<line x1="156.4" y1="388.6" x2="171.75" y2="386.45000000000005" stroke="#5cf05c" stroke-width="1.80" opacity="0.6"/>
<line x1="171.75" y1="386.45000000000005" x2="187.1" y2="384.3" stroke="#34d234" stroke-width="4.5"/>
<line x1="171.75" y1="386.45000000000005" x2="187.1" y2="384.3" stroke="#5cf05c" stroke-width="1.80" opacity="0.6"/>
<line x1="187.1" y1="384.3" x2="196.39999999999998" y2="376.8" stroke="#34d234" stroke-width="4.5"/>
<line x1="187.1" y1="384.3" x2="196.39999999999998" y2="376.8" stroke="#5cf05c" stroke-width="1.80" opacity="0.6"/>
<line x1="196.39999999999998" y1="376.8" x2="205.7" y2="369.3" stroke="#34d234" stroke-width="4.5"/>
<line x1="196.39999999999998" y1="376.8" x2="205.7" y2="369.3" stroke="#5cf05c" stroke-width="1.80" opacity="0.6"/>
<line x1="205.7" y1="369.3" x2="205.7" y2="366.45000000000005" stroke="#34d234" stroke-width="4.5"/>
<line x1="205.7" y1="369.3" x2="205.7" y2="366.45000000000005" stroke="#5cf05c" stroke-width="1.80" opacity="0.6"/>
<line x1="205.7" y1="366.45000000000005" x2="205.7" y2="363.6" stroke="#34d234" stroke-width="4.5"/>
<line x1="205.7" y1="366.45000000000005" x2="205.7" y2="363.6" stroke="#5cf05c" stroke-width="1.80" opacity="0.6"/>
<line x1="156.4" y1="388.6" x2="151.05" y2="394.65" stroke="#34d234" stroke-width="4.5"/>
<line x1="156.4" y1="388.6" x2="151.05" y2="394.65" stroke="#5cf05c" stroke-width="1.80" opacity="0.6"/>
<line x1="151.05" y1="394.65" x2="145.7" y2="400.7" stroke="#c8c6c8" stroke-width="4.5"/>
<line x1="151.05" y1="394.65" x2="145.7" y2="400.7" stroke="#f2f2f2" stroke-width="1.80" opacity="0.6"/>
<line x1="232.6" y1="337.8" x2="230.25" y2="353.75" stroke="#34d234" stroke-width="4.5"/>
<line x1="232.6" y1="337.8" x2="230.25" y2="353.75" stroke="#5cf05c" stroke-width="1.80" opacity="0.6"/>
<line x1="230.25" y1="353.75" x2="227.9" y2="369.7" stroke="#d42222" stroke-width="4.5"/>
<line x1="230.25" y1="353.75" x2="227.9" y2="369.7" stroke="#ff5050" stroke-width="1.80" opacity="0.6"/>
<line x1="227.9" y1="369.7" x2="239.55" y2="376.65" stroke="#d42222" stroke-width="4.5"/>
<line x1="227.9" y1="369.7" x2="239.55" y2="376.65" stroke="#ff5050" stroke-width="1.80" opacity="0.6"/>
<line x1="239.55" y1="376.65" x2="251.2" y2="383.6" stroke="#c8c6c8" stroke-width="4.5"/>
<line x1="239.55" y1="376.65" x2="251.2" y2="383.6" stroke="#f2f2f2" stroke-width="1.80" opacity="0.6"/>
<line x1="156.4" y1="388.6" x2="140.8" y2="393.55" stroke="#34d234" stroke-width="4.5"/>
<line x1="156.4" y1="388.6" x2="140.8" y2="393.55" stroke="#5cf05c" stroke-width="1.80" opacity="0.6"/>
<line x1="140.8" y1="393.55" x2="125.2" y2="398.5" stroke="#d42222" stroke-width="4.5"/>
<line x1="140.8" y1="393.55" x2="125.2" y2="398.5" stroke="#ff5050" stroke-width="1.80" opacity="0.6"/>
<line x1="125.2" y1="398.5" x2="125.35" y2="414.0" stroke="#d42222" stroke-width="4.5"/>
<line x1="125.2" y1="398.5" x2="125.35" y2="414.0" stroke="#ff5050" stroke-width="1.80" opacity="0.6"/>
<line x1="125.35" y1="414.0" x2="125.5" y2="429.5" stroke="#34d234" stroke-width="4.5"/>
<line x1="125.35" y1="414.0" x2="125.5" y2="429.5" stroke="#5cf05c" stroke-width="1.80" opacity="0.6"/>
<line x1="125.5" y1="429.5" x2="112.75" y2="435.15" stroke="#34d234" stroke-width="4.5"/>
<line x1="125.5" y1="429.5" x2="112.75" y2="435.15" stroke="#5cf05c" stroke-width="1.80" opacity="0.6"/>
<line x1="112.75" y1="435.15" x2="100" y2="440.8" stroke="#c8c6c8" stroke-width="4.5"/>
<line x1="112.75" y1="435.15" x2="100" y2="440.8" stroke="#f2f2f2" stroke-width="1.80" opacity="0.6"/>
<line x1="125.5" y1="429.5" x2="131.0" y2="428.85" stroke="#34d234" stroke-width="4.5"/>
<line x1="125.5" y1="429.5" x2="131.0" y2="428.85" stroke="#5cf05c" stroke-width="1.80" opacity="0.6"/>
<line x1="131.0" y1="428.85" x2="136.5" y2="428.2" stroke="#c8c6c8" stroke-width="4.5"/>
<line x1="131.0" y1="428.85" x2="136.5" y2="428.2" stroke="#f2f2f2" stroke-width="1.80" opacity="0.6"/>
<line x1="125.5" y1="429.5" x2="132.9" y2="437.65" stroke="#34d234" stroke-width="4.5"/>
<line x1="125.5" y1="429.5" x2="132.9" y2="437.65" stroke="#5cf05c" stroke-width="1.80" opacity="0.6"/>
<line x1="132.9" y1="437.65" x2="140.3" y2="445.8" stroke="#c8c6c8" stroke-width="4.5"/>
<line x1="132.9" y1="437.65" x2="140.3" y2="445.8" stroke="#f2f2f2" stroke-width="1.80" opacity="0.6"/>
<line x1="214.2" y1="247.5" x2="214.39999999999998" y2="270.35" stroke="#34d234" stroke-width="5.0"/>
<line x1="214.2" y1="247.5" x2="214.39999999999998" y2="270.35" stroke="#5cf05c" stroke-width="2.00" opacity="0.6"/>
<line x1="214.39999999999998" y1="270.35" x2="214.6" y2="293.2" stroke="#34d234" stroke-width="5.0"/>
<line x1="214.39999999999998" y1="270.35" x2="214.6" y2="293.2" stroke="#5cf05c" stroke-width="2.00" opacity="0.6"/>
<line x1="181" y1="242" x2="181.8" y2="253" stroke="#c8c6c8" stroke-width="5.0"/>
<line x1="181" y1="242" x2="181.8" y2="253" stroke="#f2f2f2" stroke-width="2" opacity="0.6"/>
</g>
<filter id="sb" x="-30%" y="-30%" width="160%" height="160%"><feGaussianBlur stdDeviation="0.9"/></filter>
<circle cx="183.9" cy="208" r="8.4" fill="#b01618" filter="url(#sb)"/>
<circle cx="183.3" cy="206.5" r="5.5" fill="#c42222" opacity="0.5" filter="url(#sb)"/>
<circle cx="217.2" cy="232" r="9.8" fill="#b01618" filter="url(#sb)"/>
<circle cx="216.6" cy="230.5" r="6.5" fill="#c42222" opacity="0.5" filter="url(#sb)"/>
<line x1="183" y1="208.5" x2="182.4" y2="221" stroke="#d8c8c8" stroke-width="3.6" opacity="0.8" filter="url(#bl)"/>
<line x1="217" y1="232.5" x2="216" y2="245" stroke="#d8c8c8" stroke-width="3.8" opacity="0.8" filter="url(#bl)"/>
<path d="M193 200.5 Q207 195 214 221" fill="none" stroke="#c8c890" stroke-width="0.7" stroke-dasharray="0.9 0.7"/>
</svg>
<div class="t" style="left:28.10px;top:465.93px;font-size:7.32px;color:#e8e8e8;transform:scaleX(0.833);transform-origin:0 0;">#2 of 9</div>
<div class="t" style="left:112.60px;width:200px;text-align:center;top:176.96px;font-size:6.72px;color:#d8d8d8;transform:scaleX(0.833);transform-origin:50% 0;">2.5</div>
<div class="t" style="left:111.20px;width:200px;text-align:center;top:190.56px;font-size:6.72px;color:#d0d098;transform:scaleX(0.833);transform-origin:50% 0;">&lt; 2.6 &gt;</div>
<div style="position:absolute;left:7.3px;top:496.4px;width:378.2px;height:10.0px;background:#fff;border:0.8px solid #a8a8a8;box-sizing:border-box"></div>
<div style="position:absolute;left:389px;top:78.8px;width:1px;height:430.2px;background:#d4d4d4"></div>
<div style="position:absolute;left:390px;top:78.8px;width:372px;height:430.2px;background:#efeef0"></div>
<div style="position:absolute;left:390px;top:78.8px;width:371px;height:13.5px;background:#f5f2f4"></div>
<div style="position:absolute;left:761px;top:78.8px;width:1px;height:430.2px;background:#cfcfcf"></div>
<div class="t" style="left:394.40px;top:80.25px;font-size:6.96px;color:#bcbcbc;transform:scaleX(0.833);transform-origin:0 0;">StereoFitter Results</div>
<div style="position:absolute;left:751.5px;top:80.3px;width:10.0px;height:10.0px;background:#dadada"></div>
<div style="position:absolute;left:394.5px;top:107.5px;width:361.0px;height:394.8px;background:#f0eff0;border:0.8px solid #d4d4d4;box-sizing:border-box"></div>
<div style="position:absolute;left:394.7px;top:98px;width:29.900000000000034px;height:10.299999999999997px;background:#fafafa;border:0.8px solid #d4d4d4;border-bottom:none;box-sizing:border-box"></div>
<div class="t" style="left:309.20px;width:200px;text-align:center;top:98.45px;font-size:6.96px;color:#333;transform:scaleX(0.833);transform-origin:50% 0;">Results</div>
<div class="t" style="left:347.30px;width:200px;text-align:center;top:98.75px;font-size:6.96px;color:#444;transform:scaleX(0.833);transform-origin:50% 0;">Original Input</div>
<svg style="left:0;top:0" width="770" height="516" viewBox="0 0 770 516">
<rect x="408" y="114" width="7.2" height="8" fill="#e6e8ec" stroke="#8a94a8" stroke-width="1"/><line x1="410.5" y1="116" x2="410.5" y2="120.5" stroke="#8a94a8" stroke-width="0.7"/><line x1="412.8" y1="116" x2="412.8" y2="120.5" stroke="#8a94a8" stroke-width="0.7"/>
<rect x="432.6" y="114" width="5" height="6" fill="#e4e8ee" stroke="#a8b4c4" stroke-width="0.9"/><rect x="435.4" y="116.2" width="5.2" height="6" fill="#eaedf2" stroke="#98a4b8" stroke-width="0.9"/>
<rect x="735.5" y="114.3" width="7.2" height="7.2" rx="1" fill="#eceef2" stroke="#8a94a8" stroke-width="1"/><path d="M737 119.5 l4 -3" stroke="#b8c0cc" stroke-width="0.8"/>
</svg>
<div class="t" style="left:311.30px;width:200px;text-align:center;top:123.75px;font-size:6.96px;color:#444;transform:scaleX(0.833);transform-origin:50% 0;">Report</div>
<div class="t" style="left:336.30px;width:200px;text-align:center;top:123.75px;font-size:6.96px;color:#444;transform:scaleX(0.833);transform-origin:50% 0;">Copy</div>
<div class="t" style="left:639.00px;width:200px;text-align:center;top:123.45px;font-size:6.96px;color:#444;transform:scaleX(0.833);transform-origin:50% 0;">Setup</div>
<div style="position:absolute;left:399.7px;top:136.3px;width:349.7px;height:178.2px;background:#fff;border:0.9px solid #b4b4b4;box-sizing:border-box"></div>
<div style="position:absolute;left:400.5px;top:137px;width:339.79999999999995px;height:11.300000000000011px;background:#f2f1f2"></div>
<div class="t" style="left:402.00px;top:138.25px;font-size:7.08px;color:#333;transform:scaleX(0.833);transform-origin:0 0;">Solution</div>
<div class="t" style="left:492.10px;top:138.25px;font-size:7.08px;color:#333;transform:scaleX(0.833);transform-origin:0 0;">χ</div>
<div class="t" style="left:495.50px;top:135.87px;font-size:4.56px;color:#444;transform:scaleX(0.833);transform-origin:0 0;">2/n</div>
<div class="t" style="left:543.20px;top:138.25px;font-size:7.08px;color:#333;transform:scaleX(0.833);transform-origin:0 0;">χ</div>
<div class="t" style="left:546.60px;top:135.87px;font-size:4.56px;color:#444;transform:scaleX(0.833);transform-origin:0 0;">2</div>
<div class="t" style="left:594.90px;top:138.25px;font-size:7.08px;color:#333;transform:scaleX(0.833);transform-origin:0 0;">AIC</div>
<div class="t" style="left:646.30px;top:138.25px;font-size:7.08px;color:#333;transform:scaleX(0.833);transform-origin:0 0;">Relative Probability</div>
<div style="position:absolute;left:410.8px;top:148.3px;width:329.49999999999994px;height:8.733000000000004px;background:#d9d9d9"></div>
<div style="position:absolute;left:400.5px;top:156.633px;width:339.79999999999995px;height:0.8000000000000114px;background:#e6e6e6"></div>
<svg style="left:0;top:0" width="770" height="516"><polyline points="403.2,151.47 405.4,153.67 407.6,151.47" fill="none" stroke="#666" stroke-width="0.9"/></svg>
<div class="t" style="left:412.40px;top:147.81px;font-size:7.08px;color:#333;transform:scaleX(0.833);transform-origin:0 0;">Solution 1 (2 conformers)</div>
<div class="t" style="left:492.10px;top:147.81px;font-size:7.08px;color:#333;transform:scaleX(0.833);transform-origin:0 0;">1.777</div>
<div class="t" style="left:543.20px;top:147.81px;font-size:7.08px;color:#333;transform:scaleX(0.833);transform-origin:0 0;">31.992</div>
<div class="t" style="left:594.90px;top:147.81px;font-size:7.08px;color:#333;transform:scaleX(0.833);transform-origin:0 0;">33.992</div>
<div class="t" style="left:646.30px;top:147.81px;font-size:7.08px;color:#333;transform:scaleX(0.833);transform-origin:0 0;">1.000</div>
<div style="position:absolute;left:400.5px;top:165.366px;width:339.79999999999995px;height:0.8000000000000114px;background:#e6e6e6"></div>
<div class="t" style="left:422.70px;top:156.55px;font-size:7.08px;color:#444;transform:scaleX(0.833);transform-origin:0 0;">Conformer 2:</div>
<div class="t" style="left:289.40px;width:200px;text-align:right;top:156.55px;font-size:7.08px;color:#444;transform:scaleX(0.833);transform-origin:100% 0;">13.9202%</div>
<div style="position:absolute;left:400.5px;top:174.09900000000002px;width:339.79999999999995px;height:0.8000000000000114px;background:#e6e6e6"></div>
<div class="t" style="left:422.70px;top:165.28px;font-size:7.08px;color:#444;transform:scaleX(0.833);transform-origin:0 0;">Conformer 8:</div>
<div class="t" style="left:289.40px;width:200px;text-align:right;top:165.28px;font-size:7.08px;color:#444;transform:scaleX(0.833);transform-origin:100% 0;">86.0798%</div>
<div style="position:absolute;left:400.5px;top:182.83200000000002px;width:339.79999999999995px;height:0.8000000000000114px;background:#e6e6e6"></div>
<svg style="left:0;top:0" width="770" height="516"><polyline points="403.2,177.67 405.4,179.87 407.6,177.67" fill="none" stroke="#666" stroke-width="0.9"/></svg>
<div class="t" style="left:412.40px;top:174.01px;font-size:7.08px;color:#333;transform:scaleX(0.833);transform-origin:0 0;">Solution 2 (3 conformers)</div>
<div class="t" style="left:492.10px;top:174.01px;font-size:7.08px;color:#333;transform:scaleX(0.833);transform-origin:0 0;">1.686</div>
<div class="t" style="left:543.20px;top:174.01px;font-size:7.08px;color:#333;transform:scaleX(0.833);transform-origin:0 0;">30.347</div>
<div class="t" style="left:594.90px;top:174.01px;font-size:7.08px;color:#333;transform:scaleX(0.833);transform-origin:0 0;">34.347</div>
<div class="t" style="left:646.30px;top:174.01px;font-size:7.08px;color:#333;transform:scaleX(0.833);transform-origin:0 0;">0.837</div>
<div style="position:absolute;left:400.5px;top:191.56500000000003px;width:339.79999999999995px;height:0.8000000000000114px;background:#e6e6e6"></div>
<div class="t" style="left:422.70px;top:182.74px;font-size:7.08px;color:#444;transform:scaleX(0.833);transform-origin:0 0;">Conformer 6:</div>
<div class="t" style="left:289.40px;width:200px;text-align:right;top:182.74px;font-size:7.08px;color:#444;transform:scaleX(0.833);transform-origin:100% 0;">28.4436%</div>
<div style="position:absolute;left:400.5px;top:200.29800000000003px;width:339.79999999999995px;height:0.8000000000000114px;background:#e6e6e6"></div>
<div class="t" style="left:422.70px;top:191.48px;font-size:7.08px;color:#444;transform:scaleX(0.833);transform-origin:0 0;">Conformer 7:</div>
<div class="t" style="left:289.40px;width:200px;text-align:right;top:191.48px;font-size:7.08px;color:#444;transform:scaleX(0.833);transform-origin:100% 0;">20.6396%</div>
<div style="position:absolute;left:400.5px;top:209.031px;width:339.79999999999995px;height:0.8000000000000114px;background:#e6e6e6"></div>
<div class="t" style="left:422.70px;top:200.21px;font-size:7.08px;color:#444;transform:scaleX(0.833);transform-origin:0 0;">Conformer 9:</div>
<div class="t" style="left:289.40px;width:200px;text-align:right;top:200.21px;font-size:7.08px;color:#444;transform:scaleX(0.833);transform-origin:100% 0;">50.9167%</div>
<div style="position:absolute;left:400.5px;top:217.764px;width:339.79999999999995px;height:0.8000000000000114px;background:#e6e6e6"></div>
<svg style="left:0;top:0" width="770" height="516"><polyline points="403.2,212.60 405.4,214.80 407.6,212.60" fill="none" stroke="#666" stroke-width="0.9"/></svg>
<div class="t" style="left:412.40px;top:208.94px;font-size:7.08px;color:#333;transform:scaleX(0.833);transform-origin:0 0;">Solution 3 (3 conformers)</div>
<div class="t" style="left:492.10px;top:208.94px;font-size:7.08px;color:#333;transform:scaleX(0.833);transform-origin:0 0;">1.723</div>
<div class="t" style="left:543.20px;top:208.94px;font-size:7.08px;color:#333;transform:scaleX(0.833);transform-origin:0 0;">31.016</div>
<div class="t" style="left:594.90px;top:208.94px;font-size:7.08px;color:#333;transform:scaleX(0.833);transform-origin:0 0;">35.016</div>
<div class="t" style="left:646.30px;top:208.94px;font-size:7.08px;color:#333;transform:scaleX(0.833);transform-origin:0 0;">0.599</div>
<div style="position:absolute;left:400.5px;top:226.497px;width:339.79999999999995px;height:0.8000000000000114px;background:#e6e6e6"></div>
<div class="t" style="left:422.70px;top:217.68px;font-size:7.08px;color:#444;transform:scaleX(0.833);transform-origin:0 0;">Conformer 2:</div>
<div class="t" style="left:289.40px;width:200px;text-align:right;top:217.68px;font-size:7.08px;color:#444;transform:scaleX(0.833);transform-origin:100% 0;">12.1261%</div>
<div style="position:absolute;left:400.5px;top:235.23000000000002px;width:339.79999999999995px;height:0.8000000000000114px;background:#e6e6e6"></div>
<div class="t" style="left:422.70px;top:226.41px;font-size:7.08px;color:#444;transform:scaleX(0.833);transform-origin:0 0;">Conformer 8:</div>
<div class="t" style="left:289.40px;width:200px;text-align:right;top:226.41px;font-size:7.08px;color:#444;transform:scaleX(0.833);transform-origin:100% 0;">60.0463%</div>
<div style="position:absolute;left:400.5px;top:243.96300000000002px;width:339.79999999999995px;height:0.8000000000000114px;background:#e6e6e6"></div>
<div class="t" style="left:422.70px;top:235.14px;font-size:7.08px;color:#444;transform:scaleX(0.833);transform-origin:0 0;">Conformer 9:</div>
<div class="t" style="left:289.40px;width:200px;text-align:right;top:235.14px;font-size:7.08px;color:#444;transform:scaleX(0.833);transform-origin:100% 0;">27.8275%</div>
<div style="position:absolute;left:400.5px;top:252.696px;width:339.79999999999995px;height:0.8000000000000114px;background:#e6e6e6"></div>
<svg style="left:0;top:0" width="770" height="516"><polyline points="403.2,247.53 405.4,249.73 407.6,247.53" fill="none" stroke="#666" stroke-width="0.9"/></svg>
<div class="t" style="left:412.40px;top:243.88px;font-size:7.08px;color:#333;transform:scaleX(0.833);transform-origin:0 0;">Solution 4 (2 conformers)</div>
<div class="t" style="left:492.10px;top:243.88px;font-size:7.08px;color:#333;transform:scaleX(0.833);transform-origin:0 0;">1.843</div>
<div class="t" style="left:543.20px;top:243.88px;font-size:7.08px;color:#333;transform:scaleX(0.833);transform-origin:0 0;">33.170</div>
<div class="t" style="left:594.90px;top:243.88px;font-size:7.08px;color:#333;transform:scaleX(0.833);transform-origin:0 0;">35.170</div>
<div class="t" style="left:646.30px;top:243.88px;font-size:7.08px;color:#333;transform:scaleX(0.833);transform-origin:0 0;">0.555</div>
<div style="position:absolute;left:400.5px;top:261.42900000000003px;width:339.79999999999995px;height:0.7999999999999545px;background:#e6e6e6"></div>
<div class="t" style="left:422.70px;top:252.61px;font-size:7.08px;color:#444;transform:scaleX(0.833);transform-origin:0 0;">Conformer 6:</div>
<div class="t" style="left:289.40px;width:200px;text-align:right;top:252.61px;font-size:7.08px;color:#444;transform:scaleX(0.833);transform-origin:100% 0;">33.6668%</div>
<div style="position:absolute;left:400.5px;top:270.16200000000003px;width:339.79999999999995px;height:0.7999999999999545px;background:#e6e6e6"></div>
<div class="t" style="left:422.70px;top:261.34px;font-size:7.08px;color:#444;transform:scaleX(0.833);transform-origin:0 0;">Conformer 9:</div>
<div class="t" style="left:289.40px;width:200px;text-align:right;top:261.34px;font-size:7.08px;color:#444;transform:scaleX(0.833);transform-origin:100% 0;">66.3332%</div>
<div style="position:absolute;left:400.5px;top:278.89500000000004px;width:339.79999999999995px;height:0.7999999999999545px;background:#e6e6e6"></div>
<svg style="left:0;top:0" width="770" height="516"><polyline points="403.2,273.73 405.4,275.93 407.6,273.73" fill="none" stroke="#666" stroke-width="0.9"/></svg>
<div class="t" style="left:412.40px;top:270.07px;font-size:7.08px;color:#333;transform:scaleX(0.833);transform-origin:0 0;">Solution 5 (3 conformers)</div>
<div class="t" style="left:492.10px;top:270.07px;font-size:7.08px;color:#333;transform:scaleX(0.833);transform-origin:0 0;">1.752</div>
<div class="t" style="left:543.20px;top:270.07px;font-size:7.08px;color:#333;transform:scaleX(0.833);transform-origin:0 0;">31.542</div>
<div class="t" style="left:594.90px;top:270.07px;font-size:7.08px;color:#333;transform:scaleX(0.833);transform-origin:0 0;">35.542</div>
<div class="t" style="left:646.30px;top:270.07px;font-size:7.08px;color:#333;transform:scaleX(0.833);transform-origin:0 0;">0.461</div>
<div style="position:absolute;left:400.5px;top:287.62800000000004px;width:339.79999999999995px;height:0.7999999999999545px;background:#e6e6e6"></div>
<div class="t" style="left:422.70px;top:278.81px;font-size:7.08px;color:#444;transform:scaleX(0.833);transform-origin:0 0;">Conformer 2:</div>
<div class="t" style="left:289.40px;width:200px;text-align:right;top:278.81px;font-size:7.08px;color:#444;transform:scaleX(0.833);transform-origin:100% 0;">12.544%</div>
<div style="position:absolute;left:400.5px;top:296.36100000000005px;width:339.79999999999995px;height:0.7999999999999545px;background:#e6e6e6"></div>
<div class="t" style="left:422.70px;top:287.54px;font-size:7.08px;color:#444;transform:scaleX(0.833);transform-origin:0 0;">Conformer 5:</div>
<div class="t" style="left:289.40px;width:200px;text-align:right;top:287.54px;font-size:7.08px;color:#444;transform:scaleX(0.833);transform-origin:100% 0;">22.6783%</div>
<div style="position:absolute;left:400.5px;top:305.09400000000005px;width:339.79999999999995px;height:0.7999999999999545px;background:#e6e6e6"></div>
<div class="t" style="left:422.70px;top:296.27px;font-size:7.08px;color:#444;transform:scaleX(0.833);transform-origin:0 0;">Conformer 8:</div>
<div class="t" style="left:289.40px;width:200px;text-align:right;top:296.27px;font-size:7.08px;color:#444;transform:scaleX(0.833);transform-origin:100% 0;">64.7777%</div>
<div style="position:absolute;left:400.5px;top:313.82700000000006px;width:339.79999999999995px;height:0.7999999999999545px;background:#e6e6e6"></div>
<svg style="left:0;top:0" width="770" height="516"><polyline points="403.2,308.66 405.4,310.86 407.6,308.66" fill="none" stroke="#666" stroke-width="0.9"/></svg>
<div class="t" style="left:412.40px;top:305.01px;font-size:7.08px;color:#333;transform:scaleX(0.833);transform-origin:0 0;">Solution 6 (3 conformers)</div>
<div class="t" style="left:492.10px;top:305.01px;font-size:7.08px;color:#333;transform:scaleX(0.833);transform-origin:0 0;">1.753</div>
<div class="t" style="left:543.20px;top:305.01px;font-size:7.08px;color:#333;transform:scaleX(0.833);transform-origin:0 0;">31.546</div>
<div class="t" style="left:594.90px;top:305.01px;font-size:7.08px;color:#333;transform:scaleX(0.833);transform-origin:0 0;">35.546</div>
<div class="t" style="left:646.30px;top:305.01px;font-size:7.08px;color:#333;transform:scaleX(0.833);transform-origin:0 0;">0.460</div>
<div style="position:absolute;left:490.7px;top:137px;width:0.8000000000000114px;height:176.7px;background:#e2e2e2"></div>
<div style="position:absolute;left:541.7px;top:137px;width:0.7999999999999545px;height:176.7px;background:#e2e2e2"></div>
<div style="position:absolute;left:592.9px;top:137px;width:0.7999999999999545px;height:176.7px;background:#e2e2e2"></div>
<div style="position:absolute;left:644.8px;top:137px;width:0.7999999999999545px;height:176.7px;background:#e2e2e2"></div>
<div style="position:absolute;left:740.5px;top:137px;width:8.5px;height:176.7px;background:#f4f4f4;border-left:0.8px solid #e0e0e0;box-sizing:border-box"></div>
<div style="position:absolute;left:741.3px;top:226px;width:7.300000000000068px;height:79.69999999999999px;background:#c8c8c8"></div>
<div style="position:absolute;left:740.8px;top:137.2px;width:8.200000000000045px;height:8.800000000000011px;background:#fff;border:0.7px solid #c8c8c8;box-sizing:border-box"></div>
<div class="t" style="left:645.00px;width:200px;text-align:center;top:136.94px;font-size:7.20px;color:#555;transform:scaleX(0.833);transform-origin:50% 0;">▴</div>
<div style="position:absolute;left:740.8px;top:305.8px;width:8.200000000000045px;height:8.199999999999989px;background:#fff;border:0.7px solid #c8c8c8;box-sizing:border-box"></div>
<div class="t" style="left:645.00px;width:200px;text-align:center;top:305.14px;font-size:7.20px;color:#555;transform:scaleX(0.833);transform-origin:50% 0;">▾</div>
<div style="position:absolute;left:399.7px;top:318.2px;width:349.7px;height:177.8px;background:#fff;border:0.9px solid #b4b4b4;box-sizing:border-box"></div>
<div style="position:absolute;left:400.5px;top:319px;width:348.1px;height:10.600000000000023px;background:#efeef0"></div>
<div class="t" style="left:402.00px;top:319.55px;font-size:7.08px;color:#333;transform:scaleX(0.833);transform-origin:0 0;">Atoms</div>
<div class="t" style="left:464.40px;top:319.55px;font-size:7.08px;color:#333;transform:scaleX(0.833);transform-origin:0 0;">Experimental</div>
<div class="t" style="left:516.00px;top:319.55px;font-size:7.08px;color:#333;transform:scaleX(0.833);transform-origin:0 0;">Calculated Average</div>
<svg style="left:0;top:0" width="770" height="516"><polyline points="403.2,333 405.4,335.2 407.6,333" fill="none" stroke="#666" stroke-width="0.9"/></svg>
<div class="t" style="left:412.40px;top:329.35px;font-size:7.08px;color:#333;transform:scaleX(0.833);transform-origin:0 0;">NOE distances (Å)</div>
<div style="position:absolute;left:421.2px;top:338.2px;width:327.40000000000003px;height:8.733000000000004px;background:#d9d9d9"></div>
<div style="position:absolute;left:400.5px;top:346.533px;width:348.1px;height:0.7999999999999545px;background:#e6e6e6"></div>
<div class="t" style="left:422.70px;top:337.71px;font-size:7.08px;color:#444;transform:scaleX(0.833);transform-origin:0 0;">25,28</div>
<div class="t" style="left:464.10px;top:337.71px;font-size:7.08px;color:#444;transform:scaleX(0.833);transform-origin:0 0;">2.566</div>
<div class="t" style="left:516.00px;top:337.71px;font-size:7.08px;color:#444;transform:scaleX(0.833);transform-origin:0 0;">2.522</div>
<div style="position:absolute;left:400.5px;top:355.266px;width:348.1px;height:0.7999999999999545px;background:#e6e6e6"></div>
<div class="t" style="left:422.70px;top:346.45px;font-size:7.08px;color:#444;transform:scaleX(0.833);transform-origin:0 0;">26,27</div>
<div class="t" style="left:464.10px;top:346.45px;font-size:7.08px;color:#444;transform:scaleX(0.833);transform-origin:0 0;">2.629</div>
<div class="t" style="left:516.00px;top:346.45px;font-size:7.08px;color:#444;transform:scaleX(0.833);transform-origin:0 0;">2.284</div>
<div style="position:absolute;left:400.5px;top:363.999px;width:348.1px;height:0.7999999999999545px;background:#e6e6e6"></div>
<div class="t" style="left:422.70px;top:355.18px;font-size:7.08px;color:#444;transform:scaleX(0.833);transform-origin:0 0;">26,32</div>
<div class="t" style="left:464.10px;top:355.18px;font-size:7.08px;color:#444;transform:scaleX(0.833);transform-origin:0 0;">1.952</div>
<div class="t" style="left:516.00px;top:355.18px;font-size:7.08px;color:#444;transform:scaleX(0.833);transform-origin:0 0;">3.500</div>
<div style="position:absolute;left:400.5px;top:372.732px;width:348.1px;height:0.7999999999999545px;background:#e6e6e6"></div>
<div class="t" style="left:422.70px;top:363.91px;font-size:7.08px;color:#444;transform:scaleX(0.833);transform-origin:0 0;">26,42</div>
<div class="t" style="left:464.10px;top:363.91px;font-size:7.08px;color:#444;transform:scaleX(0.833);transform-origin:0 0;">2.599</div>
<div class="t" style="left:516.00px;top:363.91px;font-size:7.08px;color:#444;transform:scaleX(0.833);transform-origin:0 0;">2.977</div>
<div style="position:absolute;left:400.5px;top:381.46500000000003px;width:348.1px;height:0.7999999999999545px;background:#e6e6e6"></div>
<div class="t" style="left:422.70px;top:372.64px;font-size:7.08px;color:#444;transform:scaleX(0.833);transform-origin:0 0;">28,34</div>
<div class="t" style="left:464.10px;top:372.64px;font-size:7.08px;color:#444;transform:scaleX(0.833);transform-origin:0 0;">2.662</div>
<div class="t" style="left:516.00px;top:372.64px;font-size:7.08px;color:#444;transform:scaleX(0.833);transform-origin:0 0;">3.183</div>
<div style="position:absolute;left:400.5px;top:390.19800000000004px;width:348.1px;height:0.7999999999999545px;background:#e6e6e6"></div>
<div class="t" style="left:422.70px;top:381.38px;font-size:7.08px;color:#444;transform:scaleX(0.833);transform-origin:0 0;">28,36</div>
<div class="t" style="left:464.10px;top:381.38px;font-size:7.08px;color:#444;transform:scaleX(0.833);transform-origin:0 0;">3.289</div>
<div class="t" style="left:516.00px;top:381.38px;font-size:7.08px;color:#444;transform:scaleX(0.833);transform-origin:0 0;">3.090</div>
<div style="position:absolute;left:400.5px;top:398.93100000000004px;width:348.1px;height:0.7999999999999545px;background:#e6e6e6"></div>
<div class="t" style="left:422.70px;top:390.11px;font-size:7.08px;color:#444;transform:scaleX(0.833);transform-origin:0 0;">29,30</div>
<div class="t" style="left:464.10px;top:390.11px;font-size:7.08px;color:#444;transform:scaleX(0.833);transform-origin:0 0;">2.640</div>
<div class="t" style="left:516.00px;top:390.11px;font-size:7.08px;color:#444;transform:scaleX(0.833);transform-origin:0 0;">2.431</div>
<div style="position:absolute;left:400.5px;top:407.66400000000004px;width:348.1px;height:0.7999999999999545px;background:#e6e6e6"></div>
<div class="t" style="left:422.70px;top:398.84px;font-size:7.08px;color:#444;transform:scaleX(0.833);transform-origin:0 0;">29,33</div>
<div class="t" style="left:464.10px;top:398.84px;font-size:7.08px;color:#444;transform:scaleX(0.833);transform-origin:0 0;">2.563</div>
<div class="t" style="left:516.00px;top:398.84px;font-size:7.08px;color:#444;transform:scaleX(0.833);transform-origin:0 0;">2.887</div>
<div style="position:absolute;left:400.5px;top:416.397px;width:348.1px;height:0.7999999999999545px;background:#e6e6e6"></div>
<div class="t" style="left:422.70px;top:407.58px;font-size:7.08px;color:#444;transform:scaleX(0.833);transform-origin:0 0;">31,34</div>
<div class="t" style="left:464.10px;top:407.58px;font-size:7.08px;color:#444;transform:scaleX(0.833);transform-origin:0 0;">2.662</div>
<div class="t" style="left:516.00px;top:407.58px;font-size:7.08px;color:#444;transform:scaleX(0.833);transform-origin:0 0;">2.290</div>
<div style="position:absolute;left:400.5px;top:425.13000000000005px;width:348.1px;height:0.7999999999999545px;background:#e6e6e6"></div>
<div class="t" style="left:422.70px;top:416.31px;font-size:7.08px;color:#444;transform:scaleX(0.833);transform-origin:0 0;">31,36</div>
<div class="t" style="left:464.10px;top:416.31px;font-size:7.08px;color:#444;transform:scaleX(0.833);transform-origin:0 0;">3.289</div>
<div class="t" style="left:516.00px;top:416.31px;font-size:7.08px;color:#444;transform:scaleX(0.833);transform-origin:0 0;">4.097</div>
<div style="position:absolute;left:400.5px;top:433.863px;width:348.1px;height:0.7999999999999545px;background:#e6e6e6"></div>
<div class="t" style="left:422.70px;top:425.04px;font-size:7.08px;color:#444;transform:scaleX(0.833);transform-origin:0 0;">34,35</div>
<div class="t" style="left:464.10px;top:425.04px;font-size:7.08px;color:#444;transform:scaleX(0.833);transform-origin:0 0;">1.910</div>
<div class="t" style="left:516.00px;top:425.04px;font-size:7.08px;color:#444;transform:scaleX(0.833);transform-origin:0 0;">1.738</div>
<div style="position:absolute;left:400.5px;top:442.596px;width:348.1px;height:0.7999999999999545px;background:#e6e6e6"></div>
<div class="t" style="left:422.70px;top:433.78px;font-size:7.08px;color:#444;transform:scaleX(0.833);transform-origin:0 0;">34,36</div>
<div class="t" style="left:464.10px;top:433.78px;font-size:7.08px;color:#444;transform:scaleX(0.833);transform-origin:0 0;">2.605</div>
<div class="t" style="left:516.00px;top:433.78px;font-size:7.08px;color:#444;transform:scaleX(0.833);transform-origin:0 0;">2.728</div>
<div style="position:absolute;left:400.5px;top:451.329px;width:348.1px;height:0.7999999999999545px;background:#e6e6e6"></div>
<div class="t" style="left:422.70px;top:442.51px;font-size:7.08px;color:#444;transform:scaleX(0.833);transform-origin:0 0;">36,42</div>
<div class="t" style="left:464.10px;top:442.51px;font-size:7.08px;color:#444;transform:scaleX(0.833);transform-origin:0 0;">2.156</div>
<div class="t" style="left:516.00px;top:442.51px;font-size:7.08px;color:#444;transform:scaleX(0.833);transform-origin:0 0;">2.356</div>
<div style="position:absolute;left:400.5px;top:460.062px;width:348.1px;height:0.7999999999999545px;background:#e6e6e6"></div>
<div class="t" style="left:422.70px;top:451.24px;font-size:7.08px;color:#444;transform:scaleX(0.833);transform-origin:0 0;">36,41</div>
<div class="t" style="left:464.10px;top:451.24px;font-size:7.08px;color:#444;transform:scaleX(0.833);transform-origin:0 0;">2.918</div>
<div class="t" style="left:516.00px;top:451.24px;font-size:7.08px;color:#444;transform:scaleX(0.833);transform-origin:0 0;">2.984</div>
<div style="position:absolute;left:400.5px;top:468.795px;width:348.1px;height:0.7999999999999545px;background:#e6e6e6"></div>
<div class="t" style="left:422.70px;top:459.97px;font-size:7.08px;color:#444;transform:scaleX(0.833);transform-origin:0 0;">41,43</div>
<div class="t" style="left:464.10px;top:459.97px;font-size:7.08px;color:#444;transform:scaleX(0.833);transform-origin:0 0;">2.460</div>
<div class="t" style="left:516.00px;top:459.97px;font-size:7.08px;color:#444;transform:scaleX(0.833);transform-origin:0 0;">2.445</div>
<div style="position:absolute;left:400.5px;top:477.528px;width:348.1px;height:0.7999999999999545px;background:#e6e6e6"></div>
<div class="t" style="left:422.70px;top:468.71px;font-size:7.08px;color:#444;transform:scaleX(0.833);transform-origin:0 0;">42,(46,47,48)</div>
<div class="t" style="left:464.10px;top:468.71px;font-size:7.08px;color:#444;transform:scaleX(0.833);transform-origin:0 0;">2.712</div>
<div class="t" style="left:516.00px;top:468.71px;font-size:7.08px;color:#444;transform:scaleX(0.833);transform-origin:0 0;">3.454</div>
<div style="position:absolute;left:400.5px;top:486.261px;width:348.1px;height:0.7999999999999545px;background:#e6e6e6"></div>
<div class="t" style="left:422.70px;top:477.44px;font-size:7.08px;color:#444;transform:scaleX(0.833);transform-origin:0 0;">44,45</div>
<div class="t" style="left:464.10px;top:477.44px;font-size:7.08px;color:#444;transform:scaleX(0.833);transform-origin:0 0;">2.613</div>
<div class="t" style="left:516.00px;top:477.44px;font-size:7.08px;color:#444;transform:scaleX(0.833);transform-origin:0 0;">2.450</div>
<div style="position:absolute;left:400.5px;top:494.994px;width:348.1px;height:0.7999999999999545px;background:#e6e6e6"></div>
<div class="t" style="left:422.70px;top:486.17px;font-size:7.08px;color:#444;transform:scaleX(0.833);transform-origin:0 0;">45,(46,47,48)</div>
<div class="t" style="left:464.10px;top:486.17px;font-size:7.08px;color:#444;transform:scaleX(0.833);transform-origin:0 0;">2.778</div>
<div class="t" style="left:516.00px;top:486.17px;font-size:7.08px;color:#444;transform:scaleX(0.833);transform-origin:0 0;">3.105</div>
<div style="position:absolute;left:462px;top:319px;width:0.8000000000000114px;height:176.2px;background:#e2e2e2"></div>
<div style="position:absolute;left:514.1px;top:319px;width:0.7999999999999545px;height:176.2px;background:#e2e2e2"></div>
</body></html>
